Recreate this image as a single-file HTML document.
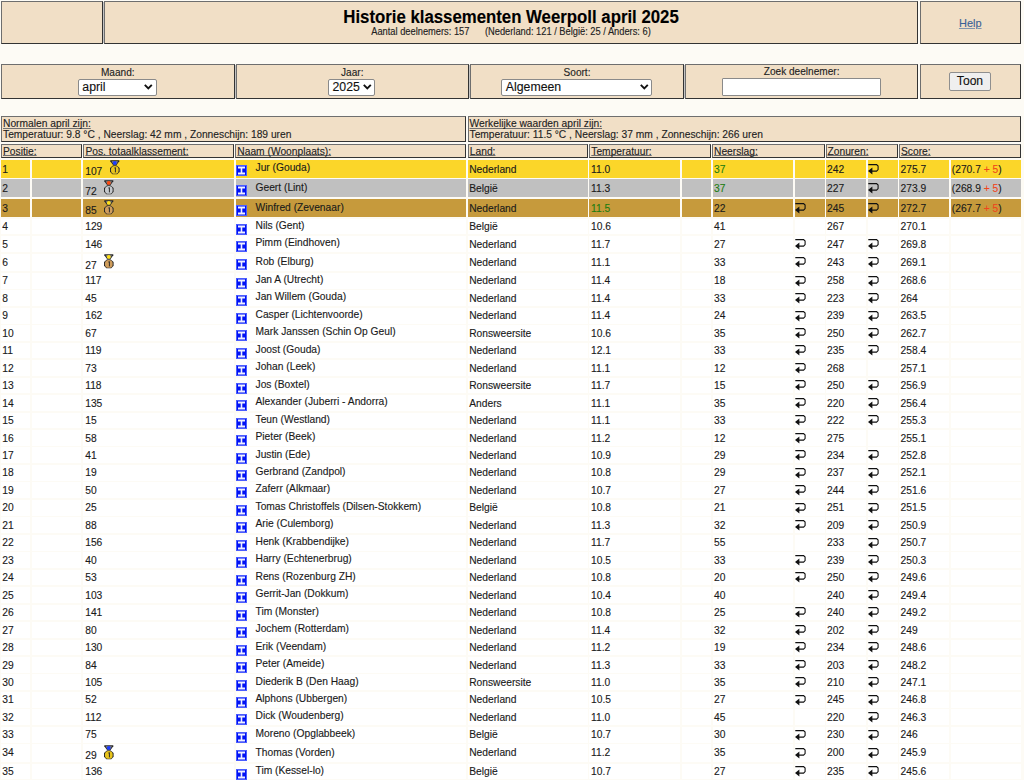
<!DOCTYPE html>
<html><head><meta charset="utf-8"><style>
html,body{margin:0;padding:0;}
body{width:1024px;height:780px;overflow:hidden;position:relative;background:#fdfbf5;font-family:"Liberation Sans",sans-serif;color:#1a1a1a;}
.t{position:absolute;line-height:0;white-space:pre;-webkit-text-stroke:0.12px currentColor;}
.hb{position:absolute;box-sizing:border-box;background:#f1dfc6;border:1px solid #555;border-top-color:#6e6e6e;border-left-color:#6e6e6e;border-bottom-color:#333;border-right-color:#333;}
.c{position:absolute;}
.ic{position:absolute;overflow:visible;}
.lnk{color:#3b6296;text-decoration:underline;text-decoration-color:#8295ad;text-underline-offset:0.5px;text-decoration-thickness:1px;}
.r{color:#f0461c;}
u{text-decoration-thickness:1px;text-underline-offset:0px;text-decoration-skip-ink:none;text-decoration-color:#707070;}
.sel{position:absolute;box-sizing:border-box;background:#fff;border:1px solid #8a8a8a;border-radius:2px;}
.chev{position:absolute;}
.inp{position:absolute;box-sizing:border-box;background:#fff;border:1px solid #8a8a8a;border-radius:1px;}
.btn{position:absolute;box-sizing:border-box;background:#efefef;border:1px solid #8f8f8f;border-radius:2px;}
</style></head><body>
<div class="c" style="left:102.5px;top:2px;width:2px;height:41px;background:#c4c4c4"></div>
<div class="hb" style="left:1px;top:1px;width:102px;height:42.5px;"></div>
<div class="hb" style="left:104px;top:1px;width:814px;height:42.5px;"></div>
<div class="hb" style="left:919.5px;top:1px;width:101.5px;height:42.5px;"></div>
<div class="t" style="left:104px;top:18.18px;font-size:16.8px;width:814px;text-align:center;font-weight:bold;transform:scaleY(1.07);transform-origin:0 5.82px;color:#000;">Historie klassementen Weerpoll april 2025</div>
<div class="t" style="left:104px;top:32.38px;font-size:9.3px;color:#222;width:814px;text-align:center;transform:scaleY(1.09);transform-origin:0 3px;">Aantal deelnemers: 157 &nbsp;&nbsp;&nbsp;&nbsp; (Nederland: 121 / België: 25 / Anders: 6)</div>
<div class="t" style="left:919.5px;top:22.79px;font-size:11px;width:101.5px;text-align:center;"><span class="lnk">Help</span></div>
<div class="hb" style="left:1px;top:64.3px;width:233.5px;height:34.3px;"></div>
<div class="hb" style="left:236px;top:64.3px;width:232.5px;height:34.3px;"></div>
<div class="hb" style="left:470px;top:64.3px;width:214px;height:34.3px;"></div>
<div class="hb" style="left:685.3px;top:64.3px;width:232.70000000000005px;height:34.3px;"></div>
<div class="hb" style="left:919.5px;top:64.3px;width:101.5px;height:34.3px;"></div>
<div class="c" style="left:234.5px;top:65px;width:1.5px;height:32.5px;background:#c4c4c4"></div>
<div class="c" style="left:468.5px;top:65px;width:1.5px;height:32.5px;background:#c4c4c4"></div>
<div class="c" style="left:684px;top:65px;width:1.2999999999999545px;height:32.5px;background:#c4c4c4"></div>
<div class="t" style="left:1px;top:72.90px;font-size:10.1px;color:#222;width:233.5px;text-align:center;">Maand:</div>
<div class="t" style="left:236px;top:72.90px;font-size:10.1px;color:#222;width:232.5px;text-align:center;">Jaar:</div>
<div class="t" style="left:470px;top:72.90px;font-size:10.1px;color:#222;width:214px;text-align:center;">Soort:</div>
<div class="t" style="left:685.3px;top:71.80px;font-size:10.1px;color:#222;width:232.70000000000005px;text-align:center;">Zoek deelnemer:</div>
<div class="sel" style="left:77.8px;top:78.5px;width:78.8px;height:17.6px;"></div><div class="t" style="left:82.3px;top:86.54px;font-size:12.3px;color:#111;">april</div><svg class="chev" style="left:144.29999999999998px;top:84.4px" width="9" height="6" viewBox="0 0 9 6"><path d="M0.8 0.9 L4.3 4.5 L7.8 0.9" fill="none" stroke="#111" stroke-width="1.9"/></svg>
<div class="sel" style="left:328px;top:78.5px;width:47.30000000000001px;height:17.6px;"></div><div class="t" style="left:332.5px;top:86.54px;font-size:12.3px;color:#111;">2025</div><svg class="chev" style="left:363.0px;top:84.4px" width="9" height="6" viewBox="0 0 9 6"><path d="M0.8 0.9 L4.3 4.5 L7.8 0.9" fill="none" stroke="#111" stroke-width="1.9"/></svg>
<div class="sel" style="left:501.3px;top:78.5px;width:150.49999999999994px;height:17.6px;"></div><div class="t" style="left:505.8px;top:86.54px;font-size:12.3px;color:#111;">Algemeen</div><svg class="chev" style="left:639.5px;top:84.4px" width="9" height="6" viewBox="0 0 9 6"><path d="M0.8 0.9 L4.3 4.5 L7.8 0.9" fill="none" stroke="#111" stroke-width="1.9"/></svg>
<div class="inp" style="left:722.2px;top:77.5px;width:158.6px;height:18.7px;"></div>
<div class="btn" style="left:949.4px;top:71.7px;width:41.2px;height:19.1px;"></div>
<div class="t" style="left:949.4px;top:80.81px;font-size:12.1px;color:#111;width:41.2px;text-align:center;">Toon</div>
<div class="hb" style="left:1px;top:116px;width:465.3px;height:26.400000000000006px;"></div>
<div class="hb" style="left:467.8px;top:116px;width:553.2px;height:26.400000000000006px;"></div>
<div class="t" style="left:3px;top:123.95px;font-size:10.25px;color:#222;"><u style="text-underline-offset:1px">Normalen april zijn:</u></div>
<div class="t" style="left:3px;top:134.55px;font-size:10.25px;color:#222;">Temperatuur: 9.8 °C , Neerslag: 42 mm , Zonneschijn: 189 uren</div>
<div class="t" style="left:469.5px;top:123.95px;font-size:10.25px;color:#222;"><u style="text-underline-offset:1px">Werkelijke waarden april zijn:</u></div>
<div class="t" style="left:469.5px;top:134.55px;font-size:10.25px;color:#222;">Temperatuur: 11.5 °C , Neerslag: 37 mm , Zonneschijn: 266 uren</div>
<div class="hb" style="left:1px;top:144px;width:81px;height:13.800000000000011px;"></div>
<div class="t" style="left:3px;top:151.75px;font-size:10.25px;color:#222;"><u>Positie:</u></div>
<div class="hb" style="left:83.4px;top:144px;width:151.1px;height:13.800000000000011px;"></div>
<div class="t" style="left:85.4px;top:151.75px;font-size:10.25px;color:#222;"><u>Pos. totaalklassement:</u></div>
<div class="hb" style="left:235.3px;top:144px;width:231.0px;height:13.800000000000011px;"></div>
<div class="t" style="left:237.3px;top:151.75px;font-size:10.25px;color:#222;"><u>Naam (Woonplaats):</u></div>
<div class="hb" style="left:467.8px;top:144px;width:120.19999999999999px;height:13.800000000000011px;"></div>
<div class="t" style="left:469.8px;top:151.75px;font-size:10.25px;color:#222;"><u>Land:</u></div>
<div class="hb" style="left:589.3px;top:144px;width:121.70000000000005px;height:13.800000000000011px;"></div>
<div class="t" style="left:591.3px;top:151.75px;font-size:10.25px;color:#222;"><u>Temperatuur:</u></div>
<div class="hb" style="left:712px;top:144px;width:112.5px;height:13.800000000000011px;"></div>
<div class="t" style="left:714px;top:151.75px;font-size:10.25px;color:#222;"><u>Neerslag:</u></div>
<div class="hb" style="left:825.5px;top:144px;width:72.5px;height:13.800000000000011px;"></div>
<div class="t" style="left:827.5px;top:151.75px;font-size:10.25px;color:#222;"><u>Zonuren:</u></div>
<div class="hb" style="left:899px;top:144px;width:122px;height:13.800000000000011px;"></div>
<div class="t" style="left:901px;top:151.75px;font-size:10.25px;color:#222;"><u>Score:</u></div>
<div class="c" style="left:1px;top:159.70px;width:29.40px;height:17.95px;background:#fbd629"></div>
<div class="c" style="left:32.1px;top:159.70px;width:49.30px;height:17.95px;background:#fbd629"></div>
<div class="c" style="left:83.1px;top:159.70px;width:150.80px;height:17.95px;background:#fbd629"></div>
<div class="c" style="left:235.6px;top:159.70px;width:230.40px;height:17.95px;background:#fbd629"></div>
<div class="c" style="left:467.7px;top:159.70px;width:119.90px;height:17.95px;background:#fbd629"></div>
<div class="c" style="left:589.3px;top:159.70px;width:90.80px;height:17.95px;background:#fbd629"></div>
<div class="c" style="left:681.8px;top:159.70px;width:29.10px;height:17.95px;background:#fbd629"></div>
<div class="c" style="left:712.6px;top:159.70px;width:80.50px;height:17.95px;background:#fbd629"></div>
<div class="c" style="left:794.8px;top:159.70px;width:29.80px;height:17.95px;background:#fbd629"></div>
<div class="c" style="left:826.3px;top:159.70px;width:39.70px;height:17.95px;background:#fbd629"></div>
<div class="c" style="left:867.7px;top:159.70px;width:30.30px;height:17.95px;background:#fbd629"></div>
<div class="c" style="left:899.2px;top:159.70px;width:50.10px;height:17.95px;background:#fbd629"></div>
<div class="c" style="left:950.9px;top:159.70px;width:70.10px;height:17.95px;background:#fbd629"></div>
<div class="t" style="left:2.2px;top:169.75px;font-size:10.25px;">1</div>
<div class="t" style="left:85.2px;top:172.10px;font-size:10.25px;">107</div>
<svg class="ic" style="left:109.9px;top:160.45px" width="10" height="15" viewBox="0 0 10 15"><path d="M0.3 0.2 H9.3 V1.2 L6.2 5.6 H3.4 L0.3 1.2 Z" fill="#262626"/><path d="M1.6 1.2 H8 L6 4.6 H3.6 Z" fill="#8a8a8a"/><circle cx="4.8" cy="2.9" r="1.9" fill="#1a3cff"/><path d="M2.9 5.4 H6.7 L9.6 8 V11.8 L7.2 14.3 H2.4 L0 11.8 V8 Z" fill="#262626"/><circle cx="4.8" cy="9.9" r="3.9" fill="#e8c41c"/><path d="M4.4 8 L5.4 7.6 V12.4" fill="none" stroke="#2a2a2a" stroke-width="1"/></svg>
<svg class="ic" style="left:236.2px;top:165.20px" width="11" height="11" viewBox="0 0 11 11"><rect x="0" y="0" width="11" height="11" fill="#4a5cff"/><rect x="1" y="1" width="9" height="9" fill="#0012f5"/><path d="M2 1.6 H9 V3.4 H6.3 V7.6 H9 V9.4 H2 V7.6 H4.7 V3.4 H2 Z" fill="#eef0ff"/></svg>
<div class="t" style="left:255.5px;top:168.25px;font-size:10.25px;">Jur (Gouda)</div>
<div class="t" style="left:469.2px;top:169.75px;font-size:10.25px;">Nederland</div>
<div class="t" style="left:591px;top:169.75px;font-size:10.25px;">11.0</div>
<div class="t" style="left:714px;top:169.75px;font-size:10.25px;color:#1d7d10;">37</div>
<div class="t" style="left:827.0px;top:169.75px;font-size:10.25px;">242</div>
<svg class="ic" style="left:868.0px;top:163.57px" width="11" height="11" viewBox="0 0 11 11"><path d="M0.3 0.6 H8.6 L10.1 2.1 V5.6 L8.6 7.1 H3.6" fill="none" stroke="#111" stroke-width="1.1"/><path d="M0 7.1 L4.4 3.6 V10.6 Z" fill="#111"/></svg>
<div class="t" style="left:900.6px;top:169.75px;font-size:10.25px;">275.7</div>
<div class="t" style="left:951.8px;top:169.75px;font-size:10.25px;">(270.7 <span class=r>+ 5</span>)</div>
<div class="c" style="left:1px;top:179.35px;width:29.40px;height:17.95px;background:#c0c0c0"></div>
<div class="c" style="left:32.1px;top:179.35px;width:49.30px;height:17.95px;background:#c0c0c0"></div>
<div class="c" style="left:83.1px;top:179.35px;width:150.80px;height:17.95px;background:#c0c0c0"></div>
<div class="c" style="left:235.6px;top:179.35px;width:230.40px;height:17.95px;background:#c0c0c0"></div>
<div class="c" style="left:467.7px;top:179.35px;width:119.90px;height:17.95px;background:#c0c0c0"></div>
<div class="c" style="left:589.3px;top:179.35px;width:90.80px;height:17.95px;background:#c0c0c0"></div>
<div class="c" style="left:681.8px;top:179.35px;width:29.10px;height:17.95px;background:#c0c0c0"></div>
<div class="c" style="left:712.6px;top:179.35px;width:80.50px;height:17.95px;background:#c0c0c0"></div>
<div class="c" style="left:794.8px;top:179.35px;width:29.80px;height:17.95px;background:#c0c0c0"></div>
<div class="c" style="left:826.3px;top:179.35px;width:39.70px;height:17.95px;background:#c0c0c0"></div>
<div class="c" style="left:867.7px;top:179.35px;width:30.30px;height:17.95px;background:#c0c0c0"></div>
<div class="c" style="left:899.2px;top:179.35px;width:50.10px;height:17.95px;background:#c0c0c0"></div>
<div class="c" style="left:950.9px;top:179.35px;width:70.10px;height:17.95px;background:#c0c0c0"></div>
<div class="t" style="left:2.2px;top:189.40px;font-size:10.25px;">2</div>
<div class="t" style="left:85.2px;top:191.75px;font-size:10.25px;">72</div>
<svg class="ic" style="left:104.2px;top:180.10px" width="10" height="15" viewBox="0 0 10 15"><path d="M0.3 0.2 H9.3 V1.2 L6.2 5.6 H3.4 L0.3 1.2 Z" fill="#262626"/><path d="M1.6 1.2 H8 L6 4.6 H3.6 Z" fill="#8a8a8a"/><circle cx="4.8" cy="2.9" r="1.9" fill="#ff4a10"/><path d="M2.9 5.4 H6.7 L9.6 8 V11.8 L7.2 14.3 H2.4 L0 11.8 V8 Z" fill="#262626"/><circle cx="4.8" cy="9.9" r="3.9" fill="#c4c8cc"/><path d="M4.4 8 L5.4 7.6 V12.4" fill="none" stroke="#2a2a2a" stroke-width="1"/></svg>
<svg class="ic" style="left:236.2px;top:184.85px" width="11" height="11" viewBox="0 0 11 11"><rect x="0" y="0" width="11" height="11" fill="#4a5cff"/><rect x="1" y="1" width="9" height="9" fill="#0012f5"/><path d="M2 1.6 H9 V3.4 H6.3 V7.6 H9 V9.4 H2 V7.6 H4.7 V3.4 H2 Z" fill="#eef0ff"/></svg>
<div class="t" style="left:255.5px;top:187.90px;font-size:10.25px;">Geert (Lint)</div>
<div class="t" style="left:469.2px;top:189.40px;font-size:10.25px;">België</div>
<div class="t" style="left:591px;top:189.40px;font-size:10.25px;">11.3</div>
<div class="t" style="left:714px;top:189.40px;font-size:10.25px;color:#1d7d10;">37</div>
<div class="t" style="left:827.0px;top:189.40px;font-size:10.25px;">227</div>
<svg class="ic" style="left:868.0px;top:183.22px" width="11" height="11" viewBox="0 0 11 11"><path d="M0.3 0.6 H8.6 L10.1 2.1 V5.6 L8.6 7.1 H3.6" fill="none" stroke="#111" stroke-width="1.1"/><path d="M0 7.1 L4.4 3.6 V10.6 Z" fill="#111"/></svg>
<div class="t" style="left:900.6px;top:189.40px;font-size:10.25px;">273.9</div>
<div class="t" style="left:951.8px;top:189.40px;font-size:10.25px;">(268.9 <span class=r>+ 5</span>)</div>
<div class="c" style="left:1px;top:199.00px;width:29.40px;height:17.95px;background:#c69a3c"></div>
<div class="c" style="left:32.1px;top:199.00px;width:49.30px;height:17.95px;background:#c69a3c"></div>
<div class="c" style="left:83.1px;top:199.00px;width:150.80px;height:17.95px;background:#c69a3c"></div>
<div class="c" style="left:235.6px;top:199.00px;width:230.40px;height:17.95px;background:#c69a3c"></div>
<div class="c" style="left:467.7px;top:199.00px;width:119.90px;height:17.95px;background:#c69a3c"></div>
<div class="c" style="left:589.3px;top:199.00px;width:90.80px;height:17.95px;background:#c69a3c"></div>
<div class="c" style="left:681.8px;top:199.00px;width:29.10px;height:17.95px;background:#c69a3c"></div>
<div class="c" style="left:712.6px;top:199.00px;width:80.50px;height:17.95px;background:#c69a3c"></div>
<div class="c" style="left:794.8px;top:199.00px;width:29.80px;height:17.95px;background:#c69a3c"></div>
<div class="c" style="left:826.3px;top:199.00px;width:39.70px;height:17.95px;background:#c69a3c"></div>
<div class="c" style="left:867.7px;top:199.00px;width:30.30px;height:17.95px;background:#c69a3c"></div>
<div class="c" style="left:899.2px;top:199.00px;width:50.10px;height:17.95px;background:#c69a3c"></div>
<div class="c" style="left:950.9px;top:199.00px;width:70.10px;height:17.95px;background:#c69a3c"></div>
<div class="t" style="left:2.2px;top:209.05px;font-size:10.25px;">3</div>
<div class="t" style="left:85.2px;top:211.40px;font-size:10.25px;">85</div>
<svg class="ic" style="left:104.2px;top:199.75px" width="10" height="15" viewBox="0 0 10 15"><path d="M0.3 0.2 H9.3 V1.2 L6.2 5.6 H3.4 L0.3 1.2 Z" fill="#262626"/><path d="M1.6 1.2 H8 L6 4.6 H3.6 Z" fill="#8a8a8a"/><circle cx="4.8" cy="2.9" r="1.9" fill="#ffe014"/><path d="M2.9 5.4 H6.7 L9.6 8 V11.8 L7.2 14.3 H2.4 L0 11.8 V8 Z" fill="#262626"/><circle cx="4.8" cy="9.9" r="3.9" fill="#cf9d5c"/><path d="M4.4 8 L5.4 7.6 V12.4" fill="none" stroke="#2a2a2a" stroke-width="1"/></svg>
<svg class="ic" style="left:236.2px;top:204.50px" width="11" height="11" viewBox="0 0 11 11"><rect x="0" y="0" width="11" height="11" fill="#4a5cff"/><rect x="1" y="1" width="9" height="9" fill="#0012f5"/><path d="M2 1.6 H9 V3.4 H6.3 V7.6 H9 V9.4 H2 V7.6 H4.7 V3.4 H2 Z" fill="#eef0ff"/></svg>
<div class="t" style="left:255.5px;top:207.55px;font-size:10.25px;">Winfred (Zevenaar)</div>
<div class="t" style="left:469.2px;top:209.05px;font-size:10.25px;">Nederland</div>
<div class="t" style="left:591px;top:209.05px;font-size:10.25px;color:#1d7d10;">11.5</div>
<div class="t" style="left:714px;top:209.05px;font-size:10.25px;">22</div>
<svg class="ic" style="left:795.4px;top:202.88px" width="11" height="11" viewBox="0 0 11 11"><path d="M0.3 0.6 H8.6 L10.1 2.1 V5.6 L8.6 7.1 H3.6" fill="none" stroke="#111" stroke-width="1.1"/><path d="M0 7.1 L4.4 3.6 V10.6 Z" fill="#111"/></svg>
<div class="t" style="left:827.0px;top:209.05px;font-size:10.25px;">245</div>
<svg class="ic" style="left:868.0px;top:202.88px" width="11" height="11" viewBox="0 0 11 11"><path d="M0.3 0.6 H8.6 L10.1 2.1 V5.6 L8.6 7.1 H3.6" fill="none" stroke="#111" stroke-width="1.1"/><path d="M0 7.1 L4.4 3.6 V10.6 Z" fill="#111"/></svg>
<div class="t" style="left:900.6px;top:209.05px;font-size:10.25px;">272.7</div>
<div class="t" style="left:951.8px;top:209.05px;font-size:10.25px;">(267.7 <span class=r>+ 5</span>)</div>
<div class="c" style="left:1px;top:218.65px;width:29.40px;height:15.76px;background:#ffffff"></div>
<div class="c" style="left:32.1px;top:218.65px;width:49.30px;height:15.76px;background:#ffffff"></div>
<div class="c" style="left:83.1px;top:218.65px;width:150.80px;height:15.76px;background:#ffffff"></div>
<div class="c" style="left:235.6px;top:218.65px;width:230.40px;height:15.76px;background:#ffffff"></div>
<div class="c" style="left:467.7px;top:218.65px;width:119.90px;height:15.76px;background:#ffffff"></div>
<div class="c" style="left:589.3px;top:218.65px;width:90.80px;height:15.76px;background:#ffffff"></div>
<div class="c" style="left:681.8px;top:218.65px;width:29.10px;height:15.76px;background:#ffffff"></div>
<div class="c" style="left:712.6px;top:218.65px;width:80.50px;height:15.76px;background:#ffffff"></div>
<div class="c" style="left:794.8px;top:218.65px;width:29.80px;height:15.76px;background:#ffffff"></div>
<div class="c" style="left:826.3px;top:218.65px;width:39.70px;height:15.76px;background:#ffffff"></div>
<div class="c" style="left:867.7px;top:218.65px;width:30.30px;height:15.76px;background:#ffffff"></div>
<div class="c" style="left:899.2px;top:218.65px;width:50.10px;height:15.76px;background:#ffffff"></div>
<div class="c" style="left:950.9px;top:218.65px;width:70.10px;height:15.76px;background:#ffffff"></div>
<div class="t" style="left:2.2px;top:227.20px;font-size:10.25px;">4</div>
<div class="t" style="left:85.2px;top:227.20px;font-size:10.25px;">129</div>
<svg class="ic" style="left:236.2px;top:223.75px" width="11" height="11" viewBox="0 0 11 11"><rect x="0" y="0" width="11" height="11" fill="#4a5cff"/><rect x="1" y="1" width="9" height="9" fill="#0012f5"/><path d="M2 1.6 H9 V3.4 H6.3 V7.6 H9 V9.4 H2 V7.6 H4.7 V3.4 H2 Z" fill="#eef0ff"/></svg>
<div class="t" style="left:255.5px;top:225.70px;font-size:10.25px;">Nils (Gent)</div>
<div class="t" style="left:469.2px;top:227.20px;font-size:10.25px;">België</div>
<div class="t" style="left:591px;top:227.20px;font-size:10.25px;">10.6</div>
<div class="t" style="left:714px;top:227.20px;font-size:10.25px;">41</div>
<div class="t" style="left:827.0px;top:227.20px;font-size:10.25px;">267</div>
<div class="t" style="left:900.6px;top:227.20px;font-size:10.25px;">270.1</div>
<div class="c" style="left:1px;top:236.11px;width:29.40px;height:15.76px;background:#ffffff"></div>
<div class="c" style="left:32.1px;top:236.11px;width:49.30px;height:15.76px;background:#ffffff"></div>
<div class="c" style="left:83.1px;top:236.11px;width:150.80px;height:15.76px;background:#ffffff"></div>
<div class="c" style="left:235.6px;top:236.11px;width:230.40px;height:15.76px;background:#ffffff"></div>
<div class="c" style="left:467.7px;top:236.11px;width:119.90px;height:15.76px;background:#ffffff"></div>
<div class="c" style="left:589.3px;top:236.11px;width:90.80px;height:15.76px;background:#ffffff"></div>
<div class="c" style="left:681.8px;top:236.11px;width:29.10px;height:15.76px;background:#ffffff"></div>
<div class="c" style="left:712.6px;top:236.11px;width:80.50px;height:15.76px;background:#ffffff"></div>
<div class="c" style="left:794.8px;top:236.11px;width:29.80px;height:15.76px;background:#ffffff"></div>
<div class="c" style="left:826.3px;top:236.11px;width:39.70px;height:15.76px;background:#ffffff"></div>
<div class="c" style="left:867.7px;top:236.11px;width:30.30px;height:15.76px;background:#ffffff"></div>
<div class="c" style="left:899.2px;top:236.11px;width:50.10px;height:15.76px;background:#ffffff"></div>
<div class="c" style="left:950.9px;top:236.11px;width:70.10px;height:15.76px;background:#ffffff"></div>
<div class="t" style="left:2.2px;top:244.66px;font-size:10.25px;">5</div>
<div class="t" style="left:85.2px;top:244.66px;font-size:10.25px;">146</div>
<svg class="ic" style="left:236.2px;top:241.21px" width="11" height="11" viewBox="0 0 11 11"><rect x="0" y="0" width="11" height="11" fill="#4a5cff"/><rect x="1" y="1" width="9" height="9" fill="#0012f5"/><path d="M2 1.6 H9 V3.4 H6.3 V7.6 H9 V9.4 H2 V7.6 H4.7 V3.4 H2 Z" fill="#eef0ff"/></svg>
<div class="t" style="left:255.5px;top:243.16px;font-size:10.25px;">Pimm (Eindhoven)</div>
<div class="t" style="left:469.2px;top:244.66px;font-size:10.25px;">Nederland</div>
<div class="t" style="left:591px;top:244.66px;font-size:10.25px;">11.7</div>
<div class="t" style="left:714px;top:244.66px;font-size:10.25px;">27</div>
<svg class="ic" style="left:795.4px;top:238.89px" width="11" height="11" viewBox="0 0 11 11"><path d="M0.3 0.6 H8.6 L10.1 2.1 V5.6 L8.6 7.1 H3.6" fill="none" stroke="#111" stroke-width="1.1"/><path d="M0 7.1 L4.4 3.6 V10.6 Z" fill="#111"/></svg>
<div class="t" style="left:827.0px;top:244.66px;font-size:10.25px;">247</div>
<svg class="ic" style="left:868.0px;top:238.89px" width="11" height="11" viewBox="0 0 11 11"><path d="M0.3 0.6 H8.6 L10.1 2.1 V5.6 L8.6 7.1 H3.6" fill="none" stroke="#111" stroke-width="1.1"/><path d="M0 7.1 L4.4 3.6 V10.6 Z" fill="#111"/></svg>
<div class="t" style="left:900.6px;top:244.66px;font-size:10.25px;">269.8</div>
<div class="c" style="left:1px;top:253.57px;width:29.40px;height:17.60px;background:#ffffff"></div>
<div class="c" style="left:32.1px;top:253.57px;width:49.30px;height:17.60px;background:#ffffff"></div>
<div class="c" style="left:83.1px;top:253.57px;width:150.80px;height:17.60px;background:#ffffff"></div>
<div class="c" style="left:235.6px;top:253.57px;width:230.40px;height:17.60px;background:#ffffff"></div>
<div class="c" style="left:467.7px;top:253.57px;width:119.90px;height:17.60px;background:#ffffff"></div>
<div class="c" style="left:589.3px;top:253.57px;width:90.80px;height:17.60px;background:#ffffff"></div>
<div class="c" style="left:681.8px;top:253.57px;width:29.10px;height:17.60px;background:#ffffff"></div>
<div class="c" style="left:712.6px;top:253.57px;width:80.50px;height:17.60px;background:#ffffff"></div>
<div class="c" style="left:794.8px;top:253.57px;width:29.80px;height:17.60px;background:#ffffff"></div>
<div class="c" style="left:826.3px;top:253.57px;width:39.70px;height:17.60px;background:#ffffff"></div>
<div class="c" style="left:867.7px;top:253.57px;width:30.30px;height:17.60px;background:#ffffff"></div>
<div class="c" style="left:899.2px;top:253.57px;width:50.10px;height:17.60px;background:#ffffff"></div>
<div class="c" style="left:950.9px;top:253.57px;width:70.10px;height:17.60px;background:#ffffff"></div>
<div class="t" style="left:2.2px;top:262.62px;font-size:10.25px;">6</div>
<div class="t" style="left:85.2px;top:265.62px;font-size:10.25px;">27</div>
<svg class="ic" style="left:104.2px;top:253.97px" width="10" height="15" viewBox="0 0 10 15"><path d="M0.3 0.2 H9.3 V1.2 L6.2 5.6 H3.4 L0.3 1.2 Z" fill="#262626"/><path d="M1.6 1.2 H8 L6 4.6 H3.6 Z" fill="#8a8a8a"/><circle cx="4.8" cy="2.9" r="1.9" fill="#ffe014"/><path d="M2.9 5.4 H6.7 L9.6 8 V11.8 L7.2 14.3 H2.4 L0 11.8 V8 Z" fill="#262626"/><circle cx="4.8" cy="9.9" r="3.9" fill="#cf9d5c"/><path d="M4.4 8 L5.4 7.6 V12.4" fill="none" stroke="#2a2a2a" stroke-width="1"/></svg>
<svg class="ic" style="left:236.2px;top:259.07px" width="11" height="11" viewBox="0 0 11 11"><rect x="0" y="0" width="11" height="11" fill="#4a5cff"/><rect x="1" y="1" width="9" height="9" fill="#0012f5"/><path d="M2 1.6 H9 V3.4 H6.3 V7.6 H9 V9.4 H2 V7.6 H4.7 V3.4 H2 Z" fill="#eef0ff"/></svg>
<div class="t" style="left:255.5px;top:262.02px;font-size:10.25px;">Rob (Elburg)</div>
<div class="t" style="left:469.2px;top:262.62px;font-size:10.25px;">Nederland</div>
<div class="t" style="left:591px;top:262.62px;font-size:10.25px;">11.1</div>
<div class="t" style="left:714px;top:262.62px;font-size:10.25px;">33</div>
<svg class="ic" style="left:795.4px;top:257.27px" width="11" height="11" viewBox="0 0 11 11"><path d="M0.3 0.6 H8.6 L10.1 2.1 V5.6 L8.6 7.1 H3.6" fill="none" stroke="#111" stroke-width="1.1"/><path d="M0 7.1 L4.4 3.6 V10.6 Z" fill="#111"/></svg>
<div class="t" style="left:827.0px;top:262.62px;font-size:10.25px;">243</div>
<svg class="ic" style="left:868.0px;top:257.27px" width="11" height="11" viewBox="0 0 11 11"><path d="M0.3 0.6 H8.6 L10.1 2.1 V5.6 L8.6 7.1 H3.6" fill="none" stroke="#111" stroke-width="1.1"/><path d="M0 7.1 L4.4 3.6 V10.6 Z" fill="#111"/></svg>
<div class="t" style="left:900.6px;top:262.62px;font-size:10.25px;">269.1</div>
<div class="c" style="left:1px;top:272.87px;width:29.40px;height:15.76px;background:#ffffff"></div>
<div class="c" style="left:32.1px;top:272.87px;width:49.30px;height:15.76px;background:#ffffff"></div>
<div class="c" style="left:83.1px;top:272.87px;width:150.80px;height:15.76px;background:#ffffff"></div>
<div class="c" style="left:235.6px;top:272.87px;width:230.40px;height:15.76px;background:#ffffff"></div>
<div class="c" style="left:467.7px;top:272.87px;width:119.90px;height:15.76px;background:#ffffff"></div>
<div class="c" style="left:589.3px;top:272.87px;width:90.80px;height:15.76px;background:#ffffff"></div>
<div class="c" style="left:681.8px;top:272.87px;width:29.10px;height:15.76px;background:#ffffff"></div>
<div class="c" style="left:712.6px;top:272.87px;width:80.50px;height:15.76px;background:#ffffff"></div>
<div class="c" style="left:794.8px;top:272.87px;width:29.80px;height:15.76px;background:#ffffff"></div>
<div class="c" style="left:826.3px;top:272.87px;width:39.70px;height:15.76px;background:#ffffff"></div>
<div class="c" style="left:867.7px;top:272.87px;width:30.30px;height:15.76px;background:#ffffff"></div>
<div class="c" style="left:899.2px;top:272.87px;width:50.10px;height:15.76px;background:#ffffff"></div>
<div class="c" style="left:950.9px;top:272.87px;width:70.10px;height:15.76px;background:#ffffff"></div>
<div class="t" style="left:2.2px;top:281.42px;font-size:10.25px;">7</div>
<div class="t" style="left:85.2px;top:281.42px;font-size:10.25px;">117</div>
<svg class="ic" style="left:236.2px;top:277.97px" width="11" height="11" viewBox="0 0 11 11"><rect x="0" y="0" width="11" height="11" fill="#4a5cff"/><rect x="1" y="1" width="9" height="9" fill="#0012f5"/><path d="M2 1.6 H9 V3.4 H6.3 V7.6 H9 V9.4 H2 V7.6 H4.7 V3.4 H2 Z" fill="#eef0ff"/></svg>
<div class="t" style="left:255.5px;top:279.92px;font-size:10.25px;">Jan A (Utrecht)</div>
<div class="t" style="left:469.2px;top:281.42px;font-size:10.25px;">Nederland</div>
<div class="t" style="left:591px;top:281.42px;font-size:10.25px;">11.4</div>
<div class="t" style="left:714px;top:281.42px;font-size:10.25px;">18</div>
<svg class="ic" style="left:795.4px;top:275.65px" width="11" height="11" viewBox="0 0 11 11"><path d="M0.3 0.6 H8.6 L10.1 2.1 V5.6 L8.6 7.1 H3.6" fill="none" stroke="#111" stroke-width="1.1"/><path d="M0 7.1 L4.4 3.6 V10.6 Z" fill="#111"/></svg>
<div class="t" style="left:827.0px;top:281.42px;font-size:10.25px;">258</div>
<svg class="ic" style="left:868.0px;top:275.65px" width="11" height="11" viewBox="0 0 11 11"><path d="M0.3 0.6 H8.6 L10.1 2.1 V5.6 L8.6 7.1 H3.6" fill="none" stroke="#111" stroke-width="1.1"/><path d="M0 7.1 L4.4 3.6 V10.6 Z" fill="#111"/></svg>
<div class="t" style="left:900.6px;top:281.42px;font-size:10.25px;">268.6</div>
<div class="c" style="left:1px;top:290.33px;width:29.40px;height:15.76px;background:#ffffff"></div>
<div class="c" style="left:32.1px;top:290.33px;width:49.30px;height:15.76px;background:#ffffff"></div>
<div class="c" style="left:83.1px;top:290.33px;width:150.80px;height:15.76px;background:#ffffff"></div>
<div class="c" style="left:235.6px;top:290.33px;width:230.40px;height:15.76px;background:#ffffff"></div>
<div class="c" style="left:467.7px;top:290.33px;width:119.90px;height:15.76px;background:#ffffff"></div>
<div class="c" style="left:589.3px;top:290.33px;width:90.80px;height:15.76px;background:#ffffff"></div>
<div class="c" style="left:681.8px;top:290.33px;width:29.10px;height:15.76px;background:#ffffff"></div>
<div class="c" style="left:712.6px;top:290.33px;width:80.50px;height:15.76px;background:#ffffff"></div>
<div class="c" style="left:794.8px;top:290.33px;width:29.80px;height:15.76px;background:#ffffff"></div>
<div class="c" style="left:826.3px;top:290.33px;width:39.70px;height:15.76px;background:#ffffff"></div>
<div class="c" style="left:867.7px;top:290.33px;width:30.30px;height:15.76px;background:#ffffff"></div>
<div class="c" style="left:899.2px;top:290.33px;width:50.10px;height:15.76px;background:#ffffff"></div>
<div class="c" style="left:950.9px;top:290.33px;width:70.10px;height:15.76px;background:#ffffff"></div>
<div class="t" style="left:2.2px;top:298.88px;font-size:10.25px;">8</div>
<div class="t" style="left:85.2px;top:298.88px;font-size:10.25px;">45</div>
<svg class="ic" style="left:236.2px;top:295.43px" width="11" height="11" viewBox="0 0 11 11"><rect x="0" y="0" width="11" height="11" fill="#4a5cff"/><rect x="1" y="1" width="9" height="9" fill="#0012f5"/><path d="M2 1.6 H9 V3.4 H6.3 V7.6 H9 V9.4 H2 V7.6 H4.7 V3.4 H2 Z" fill="#eef0ff"/></svg>
<div class="t" style="left:255.5px;top:297.38px;font-size:10.25px;">Jan Willem (Gouda)</div>
<div class="t" style="left:469.2px;top:298.88px;font-size:10.25px;">Nederland</div>
<div class="t" style="left:591px;top:298.88px;font-size:10.25px;">11.4</div>
<div class="t" style="left:714px;top:298.88px;font-size:10.25px;">33</div>
<svg class="ic" style="left:795.4px;top:293.11px" width="11" height="11" viewBox="0 0 11 11"><path d="M0.3 0.6 H8.6 L10.1 2.1 V5.6 L8.6 7.1 H3.6" fill="none" stroke="#111" stroke-width="1.1"/><path d="M0 7.1 L4.4 3.6 V10.6 Z" fill="#111"/></svg>
<div class="t" style="left:827.0px;top:298.88px;font-size:10.25px;">223</div>
<svg class="ic" style="left:868.0px;top:293.11px" width="11" height="11" viewBox="0 0 11 11"><path d="M0.3 0.6 H8.6 L10.1 2.1 V5.6 L8.6 7.1 H3.6" fill="none" stroke="#111" stroke-width="1.1"/><path d="M0 7.1 L4.4 3.6 V10.6 Z" fill="#111"/></svg>
<div class="t" style="left:900.6px;top:298.88px;font-size:10.25px;">264</div>
<div class="c" style="left:1px;top:307.79px;width:29.40px;height:15.76px;background:#ffffff"></div>
<div class="c" style="left:32.1px;top:307.79px;width:49.30px;height:15.76px;background:#ffffff"></div>
<div class="c" style="left:83.1px;top:307.79px;width:150.80px;height:15.76px;background:#ffffff"></div>
<div class="c" style="left:235.6px;top:307.79px;width:230.40px;height:15.76px;background:#ffffff"></div>
<div class="c" style="left:467.7px;top:307.79px;width:119.90px;height:15.76px;background:#ffffff"></div>
<div class="c" style="left:589.3px;top:307.79px;width:90.80px;height:15.76px;background:#ffffff"></div>
<div class="c" style="left:681.8px;top:307.79px;width:29.10px;height:15.76px;background:#ffffff"></div>
<div class="c" style="left:712.6px;top:307.79px;width:80.50px;height:15.76px;background:#ffffff"></div>
<div class="c" style="left:794.8px;top:307.79px;width:29.80px;height:15.76px;background:#ffffff"></div>
<div class="c" style="left:826.3px;top:307.79px;width:39.70px;height:15.76px;background:#ffffff"></div>
<div class="c" style="left:867.7px;top:307.79px;width:30.30px;height:15.76px;background:#ffffff"></div>
<div class="c" style="left:899.2px;top:307.79px;width:50.10px;height:15.76px;background:#ffffff"></div>
<div class="c" style="left:950.9px;top:307.79px;width:70.10px;height:15.76px;background:#ffffff"></div>
<div class="t" style="left:2.2px;top:316.34px;font-size:10.25px;">9</div>
<div class="t" style="left:85.2px;top:316.34px;font-size:10.25px;">162</div>
<svg class="ic" style="left:236.2px;top:312.89px" width="11" height="11" viewBox="0 0 11 11"><rect x="0" y="0" width="11" height="11" fill="#4a5cff"/><rect x="1" y="1" width="9" height="9" fill="#0012f5"/><path d="M2 1.6 H9 V3.4 H6.3 V7.6 H9 V9.4 H2 V7.6 H4.7 V3.4 H2 Z" fill="#eef0ff"/></svg>
<div class="t" style="left:255.5px;top:314.84px;font-size:10.25px;">Casper (Lichtenvoorde)</div>
<div class="t" style="left:469.2px;top:316.34px;font-size:10.25px;">Nederland</div>
<div class="t" style="left:591px;top:316.34px;font-size:10.25px;">11.4</div>
<div class="t" style="left:714px;top:316.34px;font-size:10.25px;">24</div>
<svg class="ic" style="left:795.4px;top:310.57px" width="11" height="11" viewBox="0 0 11 11"><path d="M0.3 0.6 H8.6 L10.1 2.1 V5.6 L8.6 7.1 H3.6" fill="none" stroke="#111" stroke-width="1.1"/><path d="M0 7.1 L4.4 3.6 V10.6 Z" fill="#111"/></svg>
<div class="t" style="left:827.0px;top:316.34px;font-size:10.25px;">239</div>
<svg class="ic" style="left:868.0px;top:310.57px" width="11" height="11" viewBox="0 0 11 11"><path d="M0.3 0.6 H8.6 L10.1 2.1 V5.6 L8.6 7.1 H3.6" fill="none" stroke="#111" stroke-width="1.1"/><path d="M0 7.1 L4.4 3.6 V10.6 Z" fill="#111"/></svg>
<div class="t" style="left:900.6px;top:316.34px;font-size:10.25px;">263.5</div>
<div class="c" style="left:1px;top:325.25px;width:29.40px;height:15.76px;background:#ffffff"></div>
<div class="c" style="left:32.1px;top:325.25px;width:49.30px;height:15.76px;background:#ffffff"></div>
<div class="c" style="left:83.1px;top:325.25px;width:150.80px;height:15.76px;background:#ffffff"></div>
<div class="c" style="left:235.6px;top:325.25px;width:230.40px;height:15.76px;background:#ffffff"></div>
<div class="c" style="left:467.7px;top:325.25px;width:119.90px;height:15.76px;background:#ffffff"></div>
<div class="c" style="left:589.3px;top:325.25px;width:90.80px;height:15.76px;background:#ffffff"></div>
<div class="c" style="left:681.8px;top:325.25px;width:29.10px;height:15.76px;background:#ffffff"></div>
<div class="c" style="left:712.6px;top:325.25px;width:80.50px;height:15.76px;background:#ffffff"></div>
<div class="c" style="left:794.8px;top:325.25px;width:29.80px;height:15.76px;background:#ffffff"></div>
<div class="c" style="left:826.3px;top:325.25px;width:39.70px;height:15.76px;background:#ffffff"></div>
<div class="c" style="left:867.7px;top:325.25px;width:30.30px;height:15.76px;background:#ffffff"></div>
<div class="c" style="left:899.2px;top:325.25px;width:50.10px;height:15.76px;background:#ffffff"></div>
<div class="c" style="left:950.9px;top:325.25px;width:70.10px;height:15.76px;background:#ffffff"></div>
<div class="t" style="left:2.2px;top:333.80px;font-size:10.25px;">10</div>
<div class="t" style="left:85.2px;top:333.80px;font-size:10.25px;">67</div>
<svg class="ic" style="left:236.2px;top:330.35px" width="11" height="11" viewBox="0 0 11 11"><rect x="0" y="0" width="11" height="11" fill="#4a5cff"/><rect x="1" y="1" width="9" height="9" fill="#0012f5"/><path d="M2 1.6 H9 V3.4 H6.3 V7.6 H9 V9.4 H2 V7.6 H4.7 V3.4 H2 Z" fill="#eef0ff"/></svg>
<div class="t" style="left:255.5px;top:332.30px;font-size:10.25px;">Mark Janssen (Schin Op Geul)</div>
<div class="t" style="left:469.2px;top:333.80px;font-size:10.25px;">Ronsweersite</div>
<div class="t" style="left:591px;top:333.80px;font-size:10.25px;">10.6</div>
<div class="t" style="left:714px;top:333.80px;font-size:10.25px;">35</div>
<svg class="ic" style="left:795.4px;top:328.03px" width="11" height="11" viewBox="0 0 11 11"><path d="M0.3 0.6 H8.6 L10.1 2.1 V5.6 L8.6 7.1 H3.6" fill="none" stroke="#111" stroke-width="1.1"/><path d="M0 7.1 L4.4 3.6 V10.6 Z" fill="#111"/></svg>
<div class="t" style="left:827.0px;top:333.80px;font-size:10.25px;">250</div>
<svg class="ic" style="left:868.0px;top:328.03px" width="11" height="11" viewBox="0 0 11 11"><path d="M0.3 0.6 H8.6 L10.1 2.1 V5.6 L8.6 7.1 H3.6" fill="none" stroke="#111" stroke-width="1.1"/><path d="M0 7.1 L4.4 3.6 V10.6 Z" fill="#111"/></svg>
<div class="t" style="left:900.6px;top:333.80px;font-size:10.25px;">262.7</div>
<div class="c" style="left:1px;top:342.71px;width:29.40px;height:15.76px;background:#ffffff"></div>
<div class="c" style="left:32.1px;top:342.71px;width:49.30px;height:15.76px;background:#ffffff"></div>
<div class="c" style="left:83.1px;top:342.71px;width:150.80px;height:15.76px;background:#ffffff"></div>
<div class="c" style="left:235.6px;top:342.71px;width:230.40px;height:15.76px;background:#ffffff"></div>
<div class="c" style="left:467.7px;top:342.71px;width:119.90px;height:15.76px;background:#ffffff"></div>
<div class="c" style="left:589.3px;top:342.71px;width:90.80px;height:15.76px;background:#ffffff"></div>
<div class="c" style="left:681.8px;top:342.71px;width:29.10px;height:15.76px;background:#ffffff"></div>
<div class="c" style="left:712.6px;top:342.71px;width:80.50px;height:15.76px;background:#ffffff"></div>
<div class="c" style="left:794.8px;top:342.71px;width:29.80px;height:15.76px;background:#ffffff"></div>
<div class="c" style="left:826.3px;top:342.71px;width:39.70px;height:15.76px;background:#ffffff"></div>
<div class="c" style="left:867.7px;top:342.71px;width:30.30px;height:15.76px;background:#ffffff"></div>
<div class="c" style="left:899.2px;top:342.71px;width:50.10px;height:15.76px;background:#ffffff"></div>
<div class="c" style="left:950.9px;top:342.71px;width:70.10px;height:15.76px;background:#ffffff"></div>
<div class="t" style="left:2.2px;top:351.26px;font-size:10.25px;">11</div>
<div class="t" style="left:85.2px;top:351.26px;font-size:10.25px;">119</div>
<svg class="ic" style="left:236.2px;top:347.81px" width="11" height="11" viewBox="0 0 11 11"><rect x="0" y="0" width="11" height="11" fill="#4a5cff"/><rect x="1" y="1" width="9" height="9" fill="#0012f5"/><path d="M2 1.6 H9 V3.4 H6.3 V7.6 H9 V9.4 H2 V7.6 H4.7 V3.4 H2 Z" fill="#eef0ff"/></svg>
<div class="t" style="left:255.5px;top:349.76px;font-size:10.25px;">Joost (Gouda)</div>
<div class="t" style="left:469.2px;top:351.26px;font-size:10.25px;">Nederland</div>
<div class="t" style="left:591px;top:351.26px;font-size:10.25px;">12.1</div>
<div class="t" style="left:714px;top:351.26px;font-size:10.25px;">33</div>
<svg class="ic" style="left:795.4px;top:345.49px" width="11" height="11" viewBox="0 0 11 11"><path d="M0.3 0.6 H8.6 L10.1 2.1 V5.6 L8.6 7.1 H3.6" fill="none" stroke="#111" stroke-width="1.1"/><path d="M0 7.1 L4.4 3.6 V10.6 Z" fill="#111"/></svg>
<div class="t" style="left:827.0px;top:351.26px;font-size:10.25px;">235</div>
<svg class="ic" style="left:868.0px;top:345.49px" width="11" height="11" viewBox="0 0 11 11"><path d="M0.3 0.6 H8.6 L10.1 2.1 V5.6 L8.6 7.1 H3.6" fill="none" stroke="#111" stroke-width="1.1"/><path d="M0 7.1 L4.4 3.6 V10.6 Z" fill="#111"/></svg>
<div class="t" style="left:900.6px;top:351.26px;font-size:10.25px;">258.4</div>
<div class="c" style="left:1px;top:360.17px;width:29.40px;height:15.76px;background:#ffffff"></div>
<div class="c" style="left:32.1px;top:360.17px;width:49.30px;height:15.76px;background:#ffffff"></div>
<div class="c" style="left:83.1px;top:360.17px;width:150.80px;height:15.76px;background:#ffffff"></div>
<div class="c" style="left:235.6px;top:360.17px;width:230.40px;height:15.76px;background:#ffffff"></div>
<div class="c" style="left:467.7px;top:360.17px;width:119.90px;height:15.76px;background:#ffffff"></div>
<div class="c" style="left:589.3px;top:360.17px;width:90.80px;height:15.76px;background:#ffffff"></div>
<div class="c" style="left:681.8px;top:360.17px;width:29.10px;height:15.76px;background:#ffffff"></div>
<div class="c" style="left:712.6px;top:360.17px;width:80.50px;height:15.76px;background:#ffffff"></div>
<div class="c" style="left:794.8px;top:360.17px;width:29.80px;height:15.76px;background:#ffffff"></div>
<div class="c" style="left:826.3px;top:360.17px;width:39.70px;height:15.76px;background:#ffffff"></div>
<div class="c" style="left:867.7px;top:360.17px;width:30.30px;height:15.76px;background:#ffffff"></div>
<div class="c" style="left:899.2px;top:360.17px;width:50.10px;height:15.76px;background:#ffffff"></div>
<div class="c" style="left:950.9px;top:360.17px;width:70.10px;height:15.76px;background:#ffffff"></div>
<div class="t" style="left:2.2px;top:368.72px;font-size:10.25px;">12</div>
<div class="t" style="left:85.2px;top:368.72px;font-size:10.25px;">73</div>
<svg class="ic" style="left:236.2px;top:365.27px" width="11" height="11" viewBox="0 0 11 11"><rect x="0" y="0" width="11" height="11" fill="#4a5cff"/><rect x="1" y="1" width="9" height="9" fill="#0012f5"/><path d="M2 1.6 H9 V3.4 H6.3 V7.6 H9 V9.4 H2 V7.6 H4.7 V3.4 H2 Z" fill="#eef0ff"/></svg>
<div class="t" style="left:255.5px;top:367.22px;font-size:10.25px;">Johan (Leek)</div>
<div class="t" style="left:469.2px;top:368.72px;font-size:10.25px;">Nederland</div>
<div class="t" style="left:591px;top:368.72px;font-size:10.25px;">11.1</div>
<div class="t" style="left:714px;top:368.72px;font-size:10.25px;">12</div>
<svg class="ic" style="left:795.4px;top:362.95px" width="11" height="11" viewBox="0 0 11 11"><path d="M0.3 0.6 H8.6 L10.1 2.1 V5.6 L8.6 7.1 H3.6" fill="none" stroke="#111" stroke-width="1.1"/><path d="M0 7.1 L4.4 3.6 V10.6 Z" fill="#111"/></svg>
<div class="t" style="left:827.0px;top:368.72px;font-size:10.25px;">268</div>
<div class="t" style="left:900.6px;top:368.72px;font-size:10.25px;">257.1</div>
<div class="c" style="left:1px;top:377.63px;width:29.40px;height:15.76px;background:#ffffff"></div>
<div class="c" style="left:32.1px;top:377.63px;width:49.30px;height:15.76px;background:#ffffff"></div>
<div class="c" style="left:83.1px;top:377.63px;width:150.80px;height:15.76px;background:#ffffff"></div>
<div class="c" style="left:235.6px;top:377.63px;width:230.40px;height:15.76px;background:#ffffff"></div>
<div class="c" style="left:467.7px;top:377.63px;width:119.90px;height:15.76px;background:#ffffff"></div>
<div class="c" style="left:589.3px;top:377.63px;width:90.80px;height:15.76px;background:#ffffff"></div>
<div class="c" style="left:681.8px;top:377.63px;width:29.10px;height:15.76px;background:#ffffff"></div>
<div class="c" style="left:712.6px;top:377.63px;width:80.50px;height:15.76px;background:#ffffff"></div>
<div class="c" style="left:794.8px;top:377.63px;width:29.80px;height:15.76px;background:#ffffff"></div>
<div class="c" style="left:826.3px;top:377.63px;width:39.70px;height:15.76px;background:#ffffff"></div>
<div class="c" style="left:867.7px;top:377.63px;width:30.30px;height:15.76px;background:#ffffff"></div>
<div class="c" style="left:899.2px;top:377.63px;width:50.10px;height:15.76px;background:#ffffff"></div>
<div class="c" style="left:950.9px;top:377.63px;width:70.10px;height:15.76px;background:#ffffff"></div>
<div class="t" style="left:2.2px;top:386.18px;font-size:10.25px;">13</div>
<div class="t" style="left:85.2px;top:386.18px;font-size:10.25px;">118</div>
<svg class="ic" style="left:236.2px;top:382.73px" width="11" height="11" viewBox="0 0 11 11"><rect x="0" y="0" width="11" height="11" fill="#4a5cff"/><rect x="1" y="1" width="9" height="9" fill="#0012f5"/><path d="M2 1.6 H9 V3.4 H6.3 V7.6 H9 V9.4 H2 V7.6 H4.7 V3.4 H2 Z" fill="#eef0ff"/></svg>
<div class="t" style="left:255.5px;top:384.68px;font-size:10.25px;">Jos (Boxtel)</div>
<div class="t" style="left:469.2px;top:386.18px;font-size:10.25px;">Ronsweersite</div>
<div class="t" style="left:591px;top:386.18px;font-size:10.25px;">11.7</div>
<div class="t" style="left:714px;top:386.18px;font-size:10.25px;">15</div>
<svg class="ic" style="left:795.4px;top:380.41px" width="11" height="11" viewBox="0 0 11 11"><path d="M0.3 0.6 H8.6 L10.1 2.1 V5.6 L8.6 7.1 H3.6" fill="none" stroke="#111" stroke-width="1.1"/><path d="M0 7.1 L4.4 3.6 V10.6 Z" fill="#111"/></svg>
<div class="t" style="left:827.0px;top:386.18px;font-size:10.25px;">250</div>
<svg class="ic" style="left:868.0px;top:380.41px" width="11" height="11" viewBox="0 0 11 11"><path d="M0.3 0.6 H8.6 L10.1 2.1 V5.6 L8.6 7.1 H3.6" fill="none" stroke="#111" stroke-width="1.1"/><path d="M0 7.1 L4.4 3.6 V10.6 Z" fill="#111"/></svg>
<div class="t" style="left:900.6px;top:386.18px;font-size:10.25px;">256.9</div>
<div class="c" style="left:1px;top:395.09px;width:29.40px;height:15.76px;background:#ffffff"></div>
<div class="c" style="left:32.1px;top:395.09px;width:49.30px;height:15.76px;background:#ffffff"></div>
<div class="c" style="left:83.1px;top:395.09px;width:150.80px;height:15.76px;background:#ffffff"></div>
<div class="c" style="left:235.6px;top:395.09px;width:230.40px;height:15.76px;background:#ffffff"></div>
<div class="c" style="left:467.7px;top:395.09px;width:119.90px;height:15.76px;background:#ffffff"></div>
<div class="c" style="left:589.3px;top:395.09px;width:90.80px;height:15.76px;background:#ffffff"></div>
<div class="c" style="left:681.8px;top:395.09px;width:29.10px;height:15.76px;background:#ffffff"></div>
<div class="c" style="left:712.6px;top:395.09px;width:80.50px;height:15.76px;background:#ffffff"></div>
<div class="c" style="left:794.8px;top:395.09px;width:29.80px;height:15.76px;background:#ffffff"></div>
<div class="c" style="left:826.3px;top:395.09px;width:39.70px;height:15.76px;background:#ffffff"></div>
<div class="c" style="left:867.7px;top:395.09px;width:30.30px;height:15.76px;background:#ffffff"></div>
<div class="c" style="left:899.2px;top:395.09px;width:50.10px;height:15.76px;background:#ffffff"></div>
<div class="c" style="left:950.9px;top:395.09px;width:70.10px;height:15.76px;background:#ffffff"></div>
<div class="t" style="left:2.2px;top:403.64px;font-size:10.25px;">14</div>
<div class="t" style="left:85.2px;top:403.64px;font-size:10.25px;">135</div>
<svg class="ic" style="left:236.2px;top:400.19px" width="11" height="11" viewBox="0 0 11 11"><rect x="0" y="0" width="11" height="11" fill="#4a5cff"/><rect x="1" y="1" width="9" height="9" fill="#0012f5"/><path d="M2 1.6 H9 V3.4 H6.3 V7.6 H9 V9.4 H2 V7.6 H4.7 V3.4 H2 Z" fill="#eef0ff"/></svg>
<div class="t" style="left:255.5px;top:402.14px;font-size:10.25px;">Alexander (Juberri - Andorra)</div>
<div class="t" style="left:469.2px;top:403.64px;font-size:10.25px;">Anders</div>
<div class="t" style="left:591px;top:403.64px;font-size:10.25px;">11.1</div>
<div class="t" style="left:714px;top:403.64px;font-size:10.25px;">35</div>
<svg class="ic" style="left:795.4px;top:397.87px" width="11" height="11" viewBox="0 0 11 11"><path d="M0.3 0.6 H8.6 L10.1 2.1 V5.6 L8.6 7.1 H3.6" fill="none" stroke="#111" stroke-width="1.1"/><path d="M0 7.1 L4.4 3.6 V10.6 Z" fill="#111"/></svg>
<div class="t" style="left:827.0px;top:403.64px;font-size:10.25px;">220</div>
<svg class="ic" style="left:868.0px;top:397.87px" width="11" height="11" viewBox="0 0 11 11"><path d="M0.3 0.6 H8.6 L10.1 2.1 V5.6 L8.6 7.1 H3.6" fill="none" stroke="#111" stroke-width="1.1"/><path d="M0 7.1 L4.4 3.6 V10.6 Z" fill="#111"/></svg>
<div class="t" style="left:900.6px;top:403.64px;font-size:10.25px;">256.4</div>
<div class="c" style="left:1px;top:412.55px;width:29.40px;height:15.76px;background:#ffffff"></div>
<div class="c" style="left:32.1px;top:412.55px;width:49.30px;height:15.76px;background:#ffffff"></div>
<div class="c" style="left:83.1px;top:412.55px;width:150.80px;height:15.76px;background:#ffffff"></div>
<div class="c" style="left:235.6px;top:412.55px;width:230.40px;height:15.76px;background:#ffffff"></div>
<div class="c" style="left:467.7px;top:412.55px;width:119.90px;height:15.76px;background:#ffffff"></div>
<div class="c" style="left:589.3px;top:412.55px;width:90.80px;height:15.76px;background:#ffffff"></div>
<div class="c" style="left:681.8px;top:412.55px;width:29.10px;height:15.76px;background:#ffffff"></div>
<div class="c" style="left:712.6px;top:412.55px;width:80.50px;height:15.76px;background:#ffffff"></div>
<div class="c" style="left:794.8px;top:412.55px;width:29.80px;height:15.76px;background:#ffffff"></div>
<div class="c" style="left:826.3px;top:412.55px;width:39.70px;height:15.76px;background:#ffffff"></div>
<div class="c" style="left:867.7px;top:412.55px;width:30.30px;height:15.76px;background:#ffffff"></div>
<div class="c" style="left:899.2px;top:412.55px;width:50.10px;height:15.76px;background:#ffffff"></div>
<div class="c" style="left:950.9px;top:412.55px;width:70.10px;height:15.76px;background:#ffffff"></div>
<div class="t" style="left:2.2px;top:421.10px;font-size:10.25px;">15</div>
<div class="t" style="left:85.2px;top:421.10px;font-size:10.25px;">15</div>
<svg class="ic" style="left:236.2px;top:417.65px" width="11" height="11" viewBox="0 0 11 11"><rect x="0" y="0" width="11" height="11" fill="#4a5cff"/><rect x="1" y="1" width="9" height="9" fill="#0012f5"/><path d="M2 1.6 H9 V3.4 H6.3 V7.6 H9 V9.4 H2 V7.6 H4.7 V3.4 H2 Z" fill="#eef0ff"/></svg>
<div class="t" style="left:255.5px;top:419.60px;font-size:10.25px;">Teun (Westland)</div>
<div class="t" style="left:469.2px;top:421.10px;font-size:10.25px;">Nederland</div>
<div class="t" style="left:591px;top:421.10px;font-size:10.25px;">11.1</div>
<div class="t" style="left:714px;top:421.10px;font-size:10.25px;">33</div>
<svg class="ic" style="left:795.4px;top:415.33px" width="11" height="11" viewBox="0 0 11 11"><path d="M0.3 0.6 H8.6 L10.1 2.1 V5.6 L8.6 7.1 H3.6" fill="none" stroke="#111" stroke-width="1.1"/><path d="M0 7.1 L4.4 3.6 V10.6 Z" fill="#111"/></svg>
<div class="t" style="left:827.0px;top:421.10px;font-size:10.25px;">222</div>
<svg class="ic" style="left:868.0px;top:415.33px" width="11" height="11" viewBox="0 0 11 11"><path d="M0.3 0.6 H8.6 L10.1 2.1 V5.6 L8.6 7.1 H3.6" fill="none" stroke="#111" stroke-width="1.1"/><path d="M0 7.1 L4.4 3.6 V10.6 Z" fill="#111"/></svg>
<div class="t" style="left:900.6px;top:421.10px;font-size:10.25px;">255.3</div>
<div class="c" style="left:1px;top:430.01px;width:29.40px;height:15.76px;background:#ffffff"></div>
<div class="c" style="left:32.1px;top:430.01px;width:49.30px;height:15.76px;background:#ffffff"></div>
<div class="c" style="left:83.1px;top:430.01px;width:150.80px;height:15.76px;background:#ffffff"></div>
<div class="c" style="left:235.6px;top:430.01px;width:230.40px;height:15.76px;background:#ffffff"></div>
<div class="c" style="left:467.7px;top:430.01px;width:119.90px;height:15.76px;background:#ffffff"></div>
<div class="c" style="left:589.3px;top:430.01px;width:90.80px;height:15.76px;background:#ffffff"></div>
<div class="c" style="left:681.8px;top:430.01px;width:29.10px;height:15.76px;background:#ffffff"></div>
<div class="c" style="left:712.6px;top:430.01px;width:80.50px;height:15.76px;background:#ffffff"></div>
<div class="c" style="left:794.8px;top:430.01px;width:29.80px;height:15.76px;background:#ffffff"></div>
<div class="c" style="left:826.3px;top:430.01px;width:39.70px;height:15.76px;background:#ffffff"></div>
<div class="c" style="left:867.7px;top:430.01px;width:30.30px;height:15.76px;background:#ffffff"></div>
<div class="c" style="left:899.2px;top:430.01px;width:50.10px;height:15.76px;background:#ffffff"></div>
<div class="c" style="left:950.9px;top:430.01px;width:70.10px;height:15.76px;background:#ffffff"></div>
<div class="t" style="left:2.2px;top:438.56px;font-size:10.25px;">16</div>
<div class="t" style="left:85.2px;top:438.56px;font-size:10.25px;">58</div>
<svg class="ic" style="left:236.2px;top:435.11px" width="11" height="11" viewBox="0 0 11 11"><rect x="0" y="0" width="11" height="11" fill="#4a5cff"/><rect x="1" y="1" width="9" height="9" fill="#0012f5"/><path d="M2 1.6 H9 V3.4 H6.3 V7.6 H9 V9.4 H2 V7.6 H4.7 V3.4 H2 Z" fill="#eef0ff"/></svg>
<div class="t" style="left:255.5px;top:437.06px;font-size:10.25px;">Pieter (Beek)</div>
<div class="t" style="left:469.2px;top:438.56px;font-size:10.25px;">Nederland</div>
<div class="t" style="left:591px;top:438.56px;font-size:10.25px;">11.2</div>
<div class="t" style="left:714px;top:438.56px;font-size:10.25px;">12</div>
<svg class="ic" style="left:795.4px;top:432.79px" width="11" height="11" viewBox="0 0 11 11"><path d="M0.3 0.6 H8.6 L10.1 2.1 V5.6 L8.6 7.1 H3.6" fill="none" stroke="#111" stroke-width="1.1"/><path d="M0 7.1 L4.4 3.6 V10.6 Z" fill="#111"/></svg>
<div class="t" style="left:827.0px;top:438.56px;font-size:10.25px;">275</div>
<div class="t" style="left:900.6px;top:438.56px;font-size:10.25px;">255.1</div>
<div class="c" style="left:1px;top:447.47px;width:29.40px;height:15.76px;background:#ffffff"></div>
<div class="c" style="left:32.1px;top:447.47px;width:49.30px;height:15.76px;background:#ffffff"></div>
<div class="c" style="left:83.1px;top:447.47px;width:150.80px;height:15.76px;background:#ffffff"></div>
<div class="c" style="left:235.6px;top:447.47px;width:230.40px;height:15.76px;background:#ffffff"></div>
<div class="c" style="left:467.7px;top:447.47px;width:119.90px;height:15.76px;background:#ffffff"></div>
<div class="c" style="left:589.3px;top:447.47px;width:90.80px;height:15.76px;background:#ffffff"></div>
<div class="c" style="left:681.8px;top:447.47px;width:29.10px;height:15.76px;background:#ffffff"></div>
<div class="c" style="left:712.6px;top:447.47px;width:80.50px;height:15.76px;background:#ffffff"></div>
<div class="c" style="left:794.8px;top:447.47px;width:29.80px;height:15.76px;background:#ffffff"></div>
<div class="c" style="left:826.3px;top:447.47px;width:39.70px;height:15.76px;background:#ffffff"></div>
<div class="c" style="left:867.7px;top:447.47px;width:30.30px;height:15.76px;background:#ffffff"></div>
<div class="c" style="left:899.2px;top:447.47px;width:50.10px;height:15.76px;background:#ffffff"></div>
<div class="c" style="left:950.9px;top:447.47px;width:70.10px;height:15.76px;background:#ffffff"></div>
<div class="t" style="left:2.2px;top:456.02px;font-size:10.25px;">17</div>
<div class="t" style="left:85.2px;top:456.02px;font-size:10.25px;">41</div>
<svg class="ic" style="left:236.2px;top:452.57px" width="11" height="11" viewBox="0 0 11 11"><rect x="0" y="0" width="11" height="11" fill="#4a5cff"/><rect x="1" y="1" width="9" height="9" fill="#0012f5"/><path d="M2 1.6 H9 V3.4 H6.3 V7.6 H9 V9.4 H2 V7.6 H4.7 V3.4 H2 Z" fill="#eef0ff"/></svg>
<div class="t" style="left:255.5px;top:454.52px;font-size:10.25px;">Justin (Ede)</div>
<div class="t" style="left:469.2px;top:456.02px;font-size:10.25px;">Nederland</div>
<div class="t" style="left:591px;top:456.02px;font-size:10.25px;">10.9</div>
<div class="t" style="left:714px;top:456.02px;font-size:10.25px;">29</div>
<svg class="ic" style="left:795.4px;top:450.25px" width="11" height="11" viewBox="0 0 11 11"><path d="M0.3 0.6 H8.6 L10.1 2.1 V5.6 L8.6 7.1 H3.6" fill="none" stroke="#111" stroke-width="1.1"/><path d="M0 7.1 L4.4 3.6 V10.6 Z" fill="#111"/></svg>
<div class="t" style="left:827.0px;top:456.02px;font-size:10.25px;">234</div>
<svg class="ic" style="left:868.0px;top:450.25px" width="11" height="11" viewBox="0 0 11 11"><path d="M0.3 0.6 H8.6 L10.1 2.1 V5.6 L8.6 7.1 H3.6" fill="none" stroke="#111" stroke-width="1.1"/><path d="M0 7.1 L4.4 3.6 V10.6 Z" fill="#111"/></svg>
<div class="t" style="left:900.6px;top:456.02px;font-size:10.25px;">252.8</div>
<div class="c" style="left:1px;top:464.93px;width:29.40px;height:15.76px;background:#ffffff"></div>
<div class="c" style="left:32.1px;top:464.93px;width:49.30px;height:15.76px;background:#ffffff"></div>
<div class="c" style="left:83.1px;top:464.93px;width:150.80px;height:15.76px;background:#ffffff"></div>
<div class="c" style="left:235.6px;top:464.93px;width:230.40px;height:15.76px;background:#ffffff"></div>
<div class="c" style="left:467.7px;top:464.93px;width:119.90px;height:15.76px;background:#ffffff"></div>
<div class="c" style="left:589.3px;top:464.93px;width:90.80px;height:15.76px;background:#ffffff"></div>
<div class="c" style="left:681.8px;top:464.93px;width:29.10px;height:15.76px;background:#ffffff"></div>
<div class="c" style="left:712.6px;top:464.93px;width:80.50px;height:15.76px;background:#ffffff"></div>
<div class="c" style="left:794.8px;top:464.93px;width:29.80px;height:15.76px;background:#ffffff"></div>
<div class="c" style="left:826.3px;top:464.93px;width:39.70px;height:15.76px;background:#ffffff"></div>
<div class="c" style="left:867.7px;top:464.93px;width:30.30px;height:15.76px;background:#ffffff"></div>
<div class="c" style="left:899.2px;top:464.93px;width:50.10px;height:15.76px;background:#ffffff"></div>
<div class="c" style="left:950.9px;top:464.93px;width:70.10px;height:15.76px;background:#ffffff"></div>
<div class="t" style="left:2.2px;top:473.48px;font-size:10.25px;">18</div>
<div class="t" style="left:85.2px;top:473.48px;font-size:10.25px;">19</div>
<svg class="ic" style="left:236.2px;top:470.03px" width="11" height="11" viewBox="0 0 11 11"><rect x="0" y="0" width="11" height="11" fill="#4a5cff"/><rect x="1" y="1" width="9" height="9" fill="#0012f5"/><path d="M2 1.6 H9 V3.4 H6.3 V7.6 H9 V9.4 H2 V7.6 H4.7 V3.4 H2 Z" fill="#eef0ff"/></svg>
<div class="t" style="left:255.5px;top:471.98px;font-size:10.25px;">Gerbrand (Zandpol)</div>
<div class="t" style="left:469.2px;top:473.48px;font-size:10.25px;">Nederland</div>
<div class="t" style="left:591px;top:473.48px;font-size:10.25px;">10.8</div>
<div class="t" style="left:714px;top:473.48px;font-size:10.25px;">29</div>
<svg class="ic" style="left:795.4px;top:467.71px" width="11" height="11" viewBox="0 0 11 11"><path d="M0.3 0.6 H8.6 L10.1 2.1 V5.6 L8.6 7.1 H3.6" fill="none" stroke="#111" stroke-width="1.1"/><path d="M0 7.1 L4.4 3.6 V10.6 Z" fill="#111"/></svg>
<div class="t" style="left:827.0px;top:473.48px;font-size:10.25px;">237</div>
<svg class="ic" style="left:868.0px;top:467.71px" width="11" height="11" viewBox="0 0 11 11"><path d="M0.3 0.6 H8.6 L10.1 2.1 V5.6 L8.6 7.1 H3.6" fill="none" stroke="#111" stroke-width="1.1"/><path d="M0 7.1 L4.4 3.6 V10.6 Z" fill="#111"/></svg>
<div class="t" style="left:900.6px;top:473.48px;font-size:10.25px;">252.1</div>
<div class="c" style="left:1px;top:482.39px;width:29.40px;height:15.76px;background:#ffffff"></div>
<div class="c" style="left:32.1px;top:482.39px;width:49.30px;height:15.76px;background:#ffffff"></div>
<div class="c" style="left:83.1px;top:482.39px;width:150.80px;height:15.76px;background:#ffffff"></div>
<div class="c" style="left:235.6px;top:482.39px;width:230.40px;height:15.76px;background:#ffffff"></div>
<div class="c" style="left:467.7px;top:482.39px;width:119.90px;height:15.76px;background:#ffffff"></div>
<div class="c" style="left:589.3px;top:482.39px;width:90.80px;height:15.76px;background:#ffffff"></div>
<div class="c" style="left:681.8px;top:482.39px;width:29.10px;height:15.76px;background:#ffffff"></div>
<div class="c" style="left:712.6px;top:482.39px;width:80.50px;height:15.76px;background:#ffffff"></div>
<div class="c" style="left:794.8px;top:482.39px;width:29.80px;height:15.76px;background:#ffffff"></div>
<div class="c" style="left:826.3px;top:482.39px;width:39.70px;height:15.76px;background:#ffffff"></div>
<div class="c" style="left:867.7px;top:482.39px;width:30.30px;height:15.76px;background:#ffffff"></div>
<div class="c" style="left:899.2px;top:482.39px;width:50.10px;height:15.76px;background:#ffffff"></div>
<div class="c" style="left:950.9px;top:482.39px;width:70.10px;height:15.76px;background:#ffffff"></div>
<div class="t" style="left:2.2px;top:490.94px;font-size:10.25px;">19</div>
<div class="t" style="left:85.2px;top:490.94px;font-size:10.25px;">50</div>
<svg class="ic" style="left:236.2px;top:487.49px" width="11" height="11" viewBox="0 0 11 11"><rect x="0" y="0" width="11" height="11" fill="#4a5cff"/><rect x="1" y="1" width="9" height="9" fill="#0012f5"/><path d="M2 1.6 H9 V3.4 H6.3 V7.6 H9 V9.4 H2 V7.6 H4.7 V3.4 H2 Z" fill="#eef0ff"/></svg>
<div class="t" style="left:255.5px;top:489.44px;font-size:10.25px;">Zaferr (Alkmaar)</div>
<div class="t" style="left:469.2px;top:490.94px;font-size:10.25px;">Nederland</div>
<div class="t" style="left:591px;top:490.94px;font-size:10.25px;">10.7</div>
<div class="t" style="left:714px;top:490.94px;font-size:10.25px;">27</div>
<svg class="ic" style="left:795.4px;top:485.17px" width="11" height="11" viewBox="0 0 11 11"><path d="M0.3 0.6 H8.6 L10.1 2.1 V5.6 L8.6 7.1 H3.6" fill="none" stroke="#111" stroke-width="1.1"/><path d="M0 7.1 L4.4 3.6 V10.6 Z" fill="#111"/></svg>
<div class="t" style="left:827.0px;top:490.94px;font-size:10.25px;">244</div>
<svg class="ic" style="left:868.0px;top:485.17px" width="11" height="11" viewBox="0 0 11 11"><path d="M0.3 0.6 H8.6 L10.1 2.1 V5.6 L8.6 7.1 H3.6" fill="none" stroke="#111" stroke-width="1.1"/><path d="M0 7.1 L4.4 3.6 V10.6 Z" fill="#111"/></svg>
<div class="t" style="left:900.6px;top:490.94px;font-size:10.25px;">251.6</div>
<div class="c" style="left:1px;top:499.85px;width:29.40px;height:15.76px;background:#ffffff"></div>
<div class="c" style="left:32.1px;top:499.85px;width:49.30px;height:15.76px;background:#ffffff"></div>
<div class="c" style="left:83.1px;top:499.85px;width:150.80px;height:15.76px;background:#ffffff"></div>
<div class="c" style="left:235.6px;top:499.85px;width:230.40px;height:15.76px;background:#ffffff"></div>
<div class="c" style="left:467.7px;top:499.85px;width:119.90px;height:15.76px;background:#ffffff"></div>
<div class="c" style="left:589.3px;top:499.85px;width:90.80px;height:15.76px;background:#ffffff"></div>
<div class="c" style="left:681.8px;top:499.85px;width:29.10px;height:15.76px;background:#ffffff"></div>
<div class="c" style="left:712.6px;top:499.85px;width:80.50px;height:15.76px;background:#ffffff"></div>
<div class="c" style="left:794.8px;top:499.85px;width:29.80px;height:15.76px;background:#ffffff"></div>
<div class="c" style="left:826.3px;top:499.85px;width:39.70px;height:15.76px;background:#ffffff"></div>
<div class="c" style="left:867.7px;top:499.85px;width:30.30px;height:15.76px;background:#ffffff"></div>
<div class="c" style="left:899.2px;top:499.85px;width:50.10px;height:15.76px;background:#ffffff"></div>
<div class="c" style="left:950.9px;top:499.85px;width:70.10px;height:15.76px;background:#ffffff"></div>
<div class="t" style="left:2.2px;top:508.40px;font-size:10.25px;">20</div>
<div class="t" style="left:85.2px;top:508.40px;font-size:10.25px;">25</div>
<svg class="ic" style="left:236.2px;top:504.95px" width="11" height="11" viewBox="0 0 11 11"><rect x="0" y="0" width="11" height="11" fill="#4a5cff"/><rect x="1" y="1" width="9" height="9" fill="#0012f5"/><path d="M2 1.6 H9 V3.4 H6.3 V7.6 H9 V9.4 H2 V7.6 H4.7 V3.4 H2 Z" fill="#eef0ff"/></svg>
<div class="t" style="left:255.5px;top:506.90px;font-size:10.25px;">Tomas Christoffels (Dilsen-Stokkem)</div>
<div class="t" style="left:469.2px;top:508.40px;font-size:10.25px;">België</div>
<div class="t" style="left:591px;top:508.40px;font-size:10.25px;">10.8</div>
<div class="t" style="left:714px;top:508.40px;font-size:10.25px;">21</div>
<svg class="ic" style="left:795.4px;top:502.63px" width="11" height="11" viewBox="0 0 11 11"><path d="M0.3 0.6 H8.6 L10.1 2.1 V5.6 L8.6 7.1 H3.6" fill="none" stroke="#111" stroke-width="1.1"/><path d="M0 7.1 L4.4 3.6 V10.6 Z" fill="#111"/></svg>
<div class="t" style="left:827.0px;top:508.40px;font-size:10.25px;">251</div>
<svg class="ic" style="left:868.0px;top:502.63px" width="11" height="11" viewBox="0 0 11 11"><path d="M0.3 0.6 H8.6 L10.1 2.1 V5.6 L8.6 7.1 H3.6" fill="none" stroke="#111" stroke-width="1.1"/><path d="M0 7.1 L4.4 3.6 V10.6 Z" fill="#111"/></svg>
<div class="t" style="left:900.6px;top:508.40px;font-size:10.25px;">251.5</div>
<div class="c" style="left:1px;top:517.31px;width:29.40px;height:15.76px;background:#ffffff"></div>
<div class="c" style="left:32.1px;top:517.31px;width:49.30px;height:15.76px;background:#ffffff"></div>
<div class="c" style="left:83.1px;top:517.31px;width:150.80px;height:15.76px;background:#ffffff"></div>
<div class="c" style="left:235.6px;top:517.31px;width:230.40px;height:15.76px;background:#ffffff"></div>
<div class="c" style="left:467.7px;top:517.31px;width:119.90px;height:15.76px;background:#ffffff"></div>
<div class="c" style="left:589.3px;top:517.31px;width:90.80px;height:15.76px;background:#ffffff"></div>
<div class="c" style="left:681.8px;top:517.31px;width:29.10px;height:15.76px;background:#ffffff"></div>
<div class="c" style="left:712.6px;top:517.31px;width:80.50px;height:15.76px;background:#ffffff"></div>
<div class="c" style="left:794.8px;top:517.31px;width:29.80px;height:15.76px;background:#ffffff"></div>
<div class="c" style="left:826.3px;top:517.31px;width:39.70px;height:15.76px;background:#ffffff"></div>
<div class="c" style="left:867.7px;top:517.31px;width:30.30px;height:15.76px;background:#ffffff"></div>
<div class="c" style="left:899.2px;top:517.31px;width:50.10px;height:15.76px;background:#ffffff"></div>
<div class="c" style="left:950.9px;top:517.31px;width:70.10px;height:15.76px;background:#ffffff"></div>
<div class="t" style="left:2.2px;top:525.86px;font-size:10.25px;">21</div>
<div class="t" style="left:85.2px;top:525.86px;font-size:10.25px;">88</div>
<svg class="ic" style="left:236.2px;top:522.41px" width="11" height="11" viewBox="0 0 11 11"><rect x="0" y="0" width="11" height="11" fill="#4a5cff"/><rect x="1" y="1" width="9" height="9" fill="#0012f5"/><path d="M2 1.6 H9 V3.4 H6.3 V7.6 H9 V9.4 H2 V7.6 H4.7 V3.4 H2 Z" fill="#eef0ff"/></svg>
<div class="t" style="left:255.5px;top:524.36px;font-size:10.25px;">Arie (Culemborg)</div>
<div class="t" style="left:469.2px;top:525.86px;font-size:10.25px;">Nederland</div>
<div class="t" style="left:591px;top:525.86px;font-size:10.25px;">11.3</div>
<div class="t" style="left:714px;top:525.86px;font-size:10.25px;">32</div>
<svg class="ic" style="left:795.4px;top:520.09px" width="11" height="11" viewBox="0 0 11 11"><path d="M0.3 0.6 H8.6 L10.1 2.1 V5.6 L8.6 7.1 H3.6" fill="none" stroke="#111" stroke-width="1.1"/><path d="M0 7.1 L4.4 3.6 V10.6 Z" fill="#111"/></svg>
<div class="t" style="left:827.0px;top:525.86px;font-size:10.25px;">209</div>
<svg class="ic" style="left:868.0px;top:520.09px" width="11" height="11" viewBox="0 0 11 11"><path d="M0.3 0.6 H8.6 L10.1 2.1 V5.6 L8.6 7.1 H3.6" fill="none" stroke="#111" stroke-width="1.1"/><path d="M0 7.1 L4.4 3.6 V10.6 Z" fill="#111"/></svg>
<div class="t" style="left:900.6px;top:525.86px;font-size:10.25px;">250.9</div>
<div class="c" style="left:1px;top:534.77px;width:29.40px;height:15.76px;background:#ffffff"></div>
<div class="c" style="left:32.1px;top:534.77px;width:49.30px;height:15.76px;background:#ffffff"></div>
<div class="c" style="left:83.1px;top:534.77px;width:150.80px;height:15.76px;background:#ffffff"></div>
<div class="c" style="left:235.6px;top:534.77px;width:230.40px;height:15.76px;background:#ffffff"></div>
<div class="c" style="left:467.7px;top:534.77px;width:119.90px;height:15.76px;background:#ffffff"></div>
<div class="c" style="left:589.3px;top:534.77px;width:90.80px;height:15.76px;background:#ffffff"></div>
<div class="c" style="left:681.8px;top:534.77px;width:29.10px;height:15.76px;background:#ffffff"></div>
<div class="c" style="left:712.6px;top:534.77px;width:80.50px;height:15.76px;background:#ffffff"></div>
<div class="c" style="left:794.8px;top:534.77px;width:29.80px;height:15.76px;background:#ffffff"></div>
<div class="c" style="left:826.3px;top:534.77px;width:39.70px;height:15.76px;background:#ffffff"></div>
<div class="c" style="left:867.7px;top:534.77px;width:30.30px;height:15.76px;background:#ffffff"></div>
<div class="c" style="left:899.2px;top:534.77px;width:50.10px;height:15.76px;background:#ffffff"></div>
<div class="c" style="left:950.9px;top:534.77px;width:70.10px;height:15.76px;background:#ffffff"></div>
<div class="t" style="left:2.2px;top:543.32px;font-size:10.25px;">22</div>
<div class="t" style="left:85.2px;top:543.32px;font-size:10.25px;">156</div>
<svg class="ic" style="left:236.2px;top:539.87px" width="11" height="11" viewBox="0 0 11 11"><rect x="0" y="0" width="11" height="11" fill="#4a5cff"/><rect x="1" y="1" width="9" height="9" fill="#0012f5"/><path d="M2 1.6 H9 V3.4 H6.3 V7.6 H9 V9.4 H2 V7.6 H4.7 V3.4 H2 Z" fill="#eef0ff"/></svg>
<div class="t" style="left:255.5px;top:541.82px;font-size:10.25px;">Henk (Krabbendijke)</div>
<div class="t" style="left:469.2px;top:543.32px;font-size:10.25px;">Nederland</div>
<div class="t" style="left:591px;top:543.32px;font-size:10.25px;">11.7</div>
<div class="t" style="left:714px;top:543.32px;font-size:10.25px;">55</div>
<div class="t" style="left:827.0px;top:543.32px;font-size:10.25px;">233</div>
<svg class="ic" style="left:868.0px;top:537.55px" width="11" height="11" viewBox="0 0 11 11"><path d="M0.3 0.6 H8.6 L10.1 2.1 V5.6 L8.6 7.1 H3.6" fill="none" stroke="#111" stroke-width="1.1"/><path d="M0 7.1 L4.4 3.6 V10.6 Z" fill="#111"/></svg>
<div class="t" style="left:900.6px;top:543.32px;font-size:10.25px;">250.7</div>
<div class="c" style="left:1px;top:552.23px;width:29.40px;height:15.76px;background:#ffffff"></div>
<div class="c" style="left:32.1px;top:552.23px;width:49.30px;height:15.76px;background:#ffffff"></div>
<div class="c" style="left:83.1px;top:552.23px;width:150.80px;height:15.76px;background:#ffffff"></div>
<div class="c" style="left:235.6px;top:552.23px;width:230.40px;height:15.76px;background:#ffffff"></div>
<div class="c" style="left:467.7px;top:552.23px;width:119.90px;height:15.76px;background:#ffffff"></div>
<div class="c" style="left:589.3px;top:552.23px;width:90.80px;height:15.76px;background:#ffffff"></div>
<div class="c" style="left:681.8px;top:552.23px;width:29.10px;height:15.76px;background:#ffffff"></div>
<div class="c" style="left:712.6px;top:552.23px;width:80.50px;height:15.76px;background:#ffffff"></div>
<div class="c" style="left:794.8px;top:552.23px;width:29.80px;height:15.76px;background:#ffffff"></div>
<div class="c" style="left:826.3px;top:552.23px;width:39.70px;height:15.76px;background:#ffffff"></div>
<div class="c" style="left:867.7px;top:552.23px;width:30.30px;height:15.76px;background:#ffffff"></div>
<div class="c" style="left:899.2px;top:552.23px;width:50.10px;height:15.76px;background:#ffffff"></div>
<div class="c" style="left:950.9px;top:552.23px;width:70.10px;height:15.76px;background:#ffffff"></div>
<div class="t" style="left:2.2px;top:560.78px;font-size:10.25px;">23</div>
<div class="t" style="left:85.2px;top:560.78px;font-size:10.25px;">40</div>
<svg class="ic" style="left:236.2px;top:557.33px" width="11" height="11" viewBox="0 0 11 11"><rect x="0" y="0" width="11" height="11" fill="#4a5cff"/><rect x="1" y="1" width="9" height="9" fill="#0012f5"/><path d="M2 1.6 H9 V3.4 H6.3 V7.6 H9 V9.4 H2 V7.6 H4.7 V3.4 H2 Z" fill="#eef0ff"/></svg>
<div class="t" style="left:255.5px;top:559.28px;font-size:10.25px;">Harry (Echtenerbrug)</div>
<div class="t" style="left:469.2px;top:560.78px;font-size:10.25px;">Nederland</div>
<div class="t" style="left:591px;top:560.78px;font-size:10.25px;">10.5</div>
<div class="t" style="left:714px;top:560.78px;font-size:10.25px;">33</div>
<svg class="ic" style="left:795.4px;top:555.01px" width="11" height="11" viewBox="0 0 11 11"><path d="M0.3 0.6 H8.6 L10.1 2.1 V5.6 L8.6 7.1 H3.6" fill="none" stroke="#111" stroke-width="1.1"/><path d="M0 7.1 L4.4 3.6 V10.6 Z" fill="#111"/></svg>
<div class="t" style="left:827.0px;top:560.78px;font-size:10.25px;">239</div>
<svg class="ic" style="left:868.0px;top:555.01px" width="11" height="11" viewBox="0 0 11 11"><path d="M0.3 0.6 H8.6 L10.1 2.1 V5.6 L8.6 7.1 H3.6" fill="none" stroke="#111" stroke-width="1.1"/><path d="M0 7.1 L4.4 3.6 V10.6 Z" fill="#111"/></svg>
<div class="t" style="left:900.6px;top:560.78px;font-size:10.25px;">250.3</div>
<div class="c" style="left:1px;top:569.69px;width:29.40px;height:15.76px;background:#ffffff"></div>
<div class="c" style="left:32.1px;top:569.69px;width:49.30px;height:15.76px;background:#ffffff"></div>
<div class="c" style="left:83.1px;top:569.69px;width:150.80px;height:15.76px;background:#ffffff"></div>
<div class="c" style="left:235.6px;top:569.69px;width:230.40px;height:15.76px;background:#ffffff"></div>
<div class="c" style="left:467.7px;top:569.69px;width:119.90px;height:15.76px;background:#ffffff"></div>
<div class="c" style="left:589.3px;top:569.69px;width:90.80px;height:15.76px;background:#ffffff"></div>
<div class="c" style="left:681.8px;top:569.69px;width:29.10px;height:15.76px;background:#ffffff"></div>
<div class="c" style="left:712.6px;top:569.69px;width:80.50px;height:15.76px;background:#ffffff"></div>
<div class="c" style="left:794.8px;top:569.69px;width:29.80px;height:15.76px;background:#ffffff"></div>
<div class="c" style="left:826.3px;top:569.69px;width:39.70px;height:15.76px;background:#ffffff"></div>
<div class="c" style="left:867.7px;top:569.69px;width:30.30px;height:15.76px;background:#ffffff"></div>
<div class="c" style="left:899.2px;top:569.69px;width:50.10px;height:15.76px;background:#ffffff"></div>
<div class="c" style="left:950.9px;top:569.69px;width:70.10px;height:15.76px;background:#ffffff"></div>
<div class="t" style="left:2.2px;top:578.24px;font-size:10.25px;">24</div>
<div class="t" style="left:85.2px;top:578.24px;font-size:10.25px;">53</div>
<svg class="ic" style="left:236.2px;top:574.79px" width="11" height="11" viewBox="0 0 11 11"><rect x="0" y="0" width="11" height="11" fill="#4a5cff"/><rect x="1" y="1" width="9" height="9" fill="#0012f5"/><path d="M2 1.6 H9 V3.4 H6.3 V7.6 H9 V9.4 H2 V7.6 H4.7 V3.4 H2 Z" fill="#eef0ff"/></svg>
<div class="t" style="left:255.5px;top:576.74px;font-size:10.25px;">Rens (Rozenburg ZH)</div>
<div class="t" style="left:469.2px;top:578.24px;font-size:10.25px;">Nederland</div>
<div class="t" style="left:591px;top:578.24px;font-size:10.25px;">10.8</div>
<div class="t" style="left:714px;top:578.24px;font-size:10.25px;">20</div>
<svg class="ic" style="left:795.4px;top:572.47px" width="11" height="11" viewBox="0 0 11 11"><path d="M0.3 0.6 H8.6 L10.1 2.1 V5.6 L8.6 7.1 H3.6" fill="none" stroke="#111" stroke-width="1.1"/><path d="M0 7.1 L4.4 3.6 V10.6 Z" fill="#111"/></svg>
<div class="t" style="left:827.0px;top:578.24px;font-size:10.25px;">250</div>
<svg class="ic" style="left:868.0px;top:572.47px" width="11" height="11" viewBox="0 0 11 11"><path d="M0.3 0.6 H8.6 L10.1 2.1 V5.6 L8.6 7.1 H3.6" fill="none" stroke="#111" stroke-width="1.1"/><path d="M0 7.1 L4.4 3.6 V10.6 Z" fill="#111"/></svg>
<div class="t" style="left:900.6px;top:578.24px;font-size:10.25px;">249.6</div>
<div class="c" style="left:1px;top:587.15px;width:29.40px;height:15.76px;background:#ffffff"></div>
<div class="c" style="left:32.1px;top:587.15px;width:49.30px;height:15.76px;background:#ffffff"></div>
<div class="c" style="left:83.1px;top:587.15px;width:150.80px;height:15.76px;background:#ffffff"></div>
<div class="c" style="left:235.6px;top:587.15px;width:230.40px;height:15.76px;background:#ffffff"></div>
<div class="c" style="left:467.7px;top:587.15px;width:119.90px;height:15.76px;background:#ffffff"></div>
<div class="c" style="left:589.3px;top:587.15px;width:90.80px;height:15.76px;background:#ffffff"></div>
<div class="c" style="left:681.8px;top:587.15px;width:29.10px;height:15.76px;background:#ffffff"></div>
<div class="c" style="left:712.6px;top:587.15px;width:80.50px;height:15.76px;background:#ffffff"></div>
<div class="c" style="left:794.8px;top:587.15px;width:29.80px;height:15.76px;background:#ffffff"></div>
<div class="c" style="left:826.3px;top:587.15px;width:39.70px;height:15.76px;background:#ffffff"></div>
<div class="c" style="left:867.7px;top:587.15px;width:30.30px;height:15.76px;background:#ffffff"></div>
<div class="c" style="left:899.2px;top:587.15px;width:50.10px;height:15.76px;background:#ffffff"></div>
<div class="c" style="left:950.9px;top:587.15px;width:70.10px;height:15.76px;background:#ffffff"></div>
<div class="t" style="left:2.2px;top:595.70px;font-size:10.25px;">25</div>
<div class="t" style="left:85.2px;top:595.70px;font-size:10.25px;">103</div>
<svg class="ic" style="left:236.2px;top:592.25px" width="11" height="11" viewBox="0 0 11 11"><rect x="0" y="0" width="11" height="11" fill="#4a5cff"/><rect x="1" y="1" width="9" height="9" fill="#0012f5"/><path d="M2 1.6 H9 V3.4 H6.3 V7.6 H9 V9.4 H2 V7.6 H4.7 V3.4 H2 Z" fill="#eef0ff"/></svg>
<div class="t" style="left:255.5px;top:594.20px;font-size:10.25px;">Gerrit-Jan (Dokkum)</div>
<div class="t" style="left:469.2px;top:595.70px;font-size:10.25px;">Nederland</div>
<div class="t" style="left:591px;top:595.70px;font-size:10.25px;">10.4</div>
<div class="t" style="left:714px;top:595.70px;font-size:10.25px;">40</div>
<div class="t" style="left:827.0px;top:595.70px;font-size:10.25px;">240</div>
<svg class="ic" style="left:868.0px;top:589.93px" width="11" height="11" viewBox="0 0 11 11"><path d="M0.3 0.6 H8.6 L10.1 2.1 V5.6 L8.6 7.1 H3.6" fill="none" stroke="#111" stroke-width="1.1"/><path d="M0 7.1 L4.4 3.6 V10.6 Z" fill="#111"/></svg>
<div class="t" style="left:900.6px;top:595.70px;font-size:10.25px;">249.4</div>
<div class="c" style="left:1px;top:604.61px;width:29.40px;height:15.76px;background:#ffffff"></div>
<div class="c" style="left:32.1px;top:604.61px;width:49.30px;height:15.76px;background:#ffffff"></div>
<div class="c" style="left:83.1px;top:604.61px;width:150.80px;height:15.76px;background:#ffffff"></div>
<div class="c" style="left:235.6px;top:604.61px;width:230.40px;height:15.76px;background:#ffffff"></div>
<div class="c" style="left:467.7px;top:604.61px;width:119.90px;height:15.76px;background:#ffffff"></div>
<div class="c" style="left:589.3px;top:604.61px;width:90.80px;height:15.76px;background:#ffffff"></div>
<div class="c" style="left:681.8px;top:604.61px;width:29.10px;height:15.76px;background:#ffffff"></div>
<div class="c" style="left:712.6px;top:604.61px;width:80.50px;height:15.76px;background:#ffffff"></div>
<div class="c" style="left:794.8px;top:604.61px;width:29.80px;height:15.76px;background:#ffffff"></div>
<div class="c" style="left:826.3px;top:604.61px;width:39.70px;height:15.76px;background:#ffffff"></div>
<div class="c" style="left:867.7px;top:604.61px;width:30.30px;height:15.76px;background:#ffffff"></div>
<div class="c" style="left:899.2px;top:604.61px;width:50.10px;height:15.76px;background:#ffffff"></div>
<div class="c" style="left:950.9px;top:604.61px;width:70.10px;height:15.76px;background:#ffffff"></div>
<div class="t" style="left:2.2px;top:613.16px;font-size:10.25px;">26</div>
<div class="t" style="left:85.2px;top:613.16px;font-size:10.25px;">141</div>
<svg class="ic" style="left:236.2px;top:609.71px" width="11" height="11" viewBox="0 0 11 11"><rect x="0" y="0" width="11" height="11" fill="#4a5cff"/><rect x="1" y="1" width="9" height="9" fill="#0012f5"/><path d="M2 1.6 H9 V3.4 H6.3 V7.6 H9 V9.4 H2 V7.6 H4.7 V3.4 H2 Z" fill="#eef0ff"/></svg>
<div class="t" style="left:255.5px;top:611.66px;font-size:10.25px;">Tim (Monster)</div>
<div class="t" style="left:469.2px;top:613.16px;font-size:10.25px;">Nederland</div>
<div class="t" style="left:591px;top:613.16px;font-size:10.25px;">10.8</div>
<div class="t" style="left:714px;top:613.16px;font-size:10.25px;">25</div>
<svg class="ic" style="left:795.4px;top:607.39px" width="11" height="11" viewBox="0 0 11 11"><path d="M0.3 0.6 H8.6 L10.1 2.1 V5.6 L8.6 7.1 H3.6" fill="none" stroke="#111" stroke-width="1.1"/><path d="M0 7.1 L4.4 3.6 V10.6 Z" fill="#111"/></svg>
<div class="t" style="left:827.0px;top:613.16px;font-size:10.25px;">240</div>
<svg class="ic" style="left:868.0px;top:607.39px" width="11" height="11" viewBox="0 0 11 11"><path d="M0.3 0.6 H8.6 L10.1 2.1 V5.6 L8.6 7.1 H3.6" fill="none" stroke="#111" stroke-width="1.1"/><path d="M0 7.1 L4.4 3.6 V10.6 Z" fill="#111"/></svg>
<div class="t" style="left:900.6px;top:613.16px;font-size:10.25px;">249.2</div>
<div class="c" style="left:1px;top:622.07px;width:29.40px;height:15.76px;background:#ffffff"></div>
<div class="c" style="left:32.1px;top:622.07px;width:49.30px;height:15.76px;background:#ffffff"></div>
<div class="c" style="left:83.1px;top:622.07px;width:150.80px;height:15.76px;background:#ffffff"></div>
<div class="c" style="left:235.6px;top:622.07px;width:230.40px;height:15.76px;background:#ffffff"></div>
<div class="c" style="left:467.7px;top:622.07px;width:119.90px;height:15.76px;background:#ffffff"></div>
<div class="c" style="left:589.3px;top:622.07px;width:90.80px;height:15.76px;background:#ffffff"></div>
<div class="c" style="left:681.8px;top:622.07px;width:29.10px;height:15.76px;background:#ffffff"></div>
<div class="c" style="left:712.6px;top:622.07px;width:80.50px;height:15.76px;background:#ffffff"></div>
<div class="c" style="left:794.8px;top:622.07px;width:29.80px;height:15.76px;background:#ffffff"></div>
<div class="c" style="left:826.3px;top:622.07px;width:39.70px;height:15.76px;background:#ffffff"></div>
<div class="c" style="left:867.7px;top:622.07px;width:30.30px;height:15.76px;background:#ffffff"></div>
<div class="c" style="left:899.2px;top:622.07px;width:50.10px;height:15.76px;background:#ffffff"></div>
<div class="c" style="left:950.9px;top:622.07px;width:70.10px;height:15.76px;background:#ffffff"></div>
<div class="t" style="left:2.2px;top:630.62px;font-size:10.25px;">27</div>
<div class="t" style="left:85.2px;top:630.62px;font-size:10.25px;">80</div>
<svg class="ic" style="left:236.2px;top:627.17px" width="11" height="11" viewBox="0 0 11 11"><rect x="0" y="0" width="11" height="11" fill="#4a5cff"/><rect x="1" y="1" width="9" height="9" fill="#0012f5"/><path d="M2 1.6 H9 V3.4 H6.3 V7.6 H9 V9.4 H2 V7.6 H4.7 V3.4 H2 Z" fill="#eef0ff"/></svg>
<div class="t" style="left:255.5px;top:629.12px;font-size:10.25px;">Jochem (Rotterdam)</div>
<div class="t" style="left:469.2px;top:630.62px;font-size:10.25px;">Nederland</div>
<div class="t" style="left:591px;top:630.62px;font-size:10.25px;">11.4</div>
<div class="t" style="left:714px;top:630.62px;font-size:10.25px;">32</div>
<svg class="ic" style="left:795.4px;top:624.85px" width="11" height="11" viewBox="0 0 11 11"><path d="M0.3 0.6 H8.6 L10.1 2.1 V5.6 L8.6 7.1 H3.6" fill="none" stroke="#111" stroke-width="1.1"/><path d="M0 7.1 L4.4 3.6 V10.6 Z" fill="#111"/></svg>
<div class="t" style="left:827.0px;top:630.62px;font-size:10.25px;">202</div>
<svg class="ic" style="left:868.0px;top:624.85px" width="11" height="11" viewBox="0 0 11 11"><path d="M0.3 0.6 H8.6 L10.1 2.1 V5.6 L8.6 7.1 H3.6" fill="none" stroke="#111" stroke-width="1.1"/><path d="M0 7.1 L4.4 3.6 V10.6 Z" fill="#111"/></svg>
<div class="t" style="left:900.6px;top:630.62px;font-size:10.25px;">249</div>
<div class="c" style="left:1px;top:639.53px;width:29.40px;height:15.76px;background:#ffffff"></div>
<div class="c" style="left:32.1px;top:639.53px;width:49.30px;height:15.76px;background:#ffffff"></div>
<div class="c" style="left:83.1px;top:639.53px;width:150.80px;height:15.76px;background:#ffffff"></div>
<div class="c" style="left:235.6px;top:639.53px;width:230.40px;height:15.76px;background:#ffffff"></div>
<div class="c" style="left:467.7px;top:639.53px;width:119.90px;height:15.76px;background:#ffffff"></div>
<div class="c" style="left:589.3px;top:639.53px;width:90.80px;height:15.76px;background:#ffffff"></div>
<div class="c" style="left:681.8px;top:639.53px;width:29.10px;height:15.76px;background:#ffffff"></div>
<div class="c" style="left:712.6px;top:639.53px;width:80.50px;height:15.76px;background:#ffffff"></div>
<div class="c" style="left:794.8px;top:639.53px;width:29.80px;height:15.76px;background:#ffffff"></div>
<div class="c" style="left:826.3px;top:639.53px;width:39.70px;height:15.76px;background:#ffffff"></div>
<div class="c" style="left:867.7px;top:639.53px;width:30.30px;height:15.76px;background:#ffffff"></div>
<div class="c" style="left:899.2px;top:639.53px;width:50.10px;height:15.76px;background:#ffffff"></div>
<div class="c" style="left:950.9px;top:639.53px;width:70.10px;height:15.76px;background:#ffffff"></div>
<div class="t" style="left:2.2px;top:648.08px;font-size:10.25px;">28</div>
<div class="t" style="left:85.2px;top:648.08px;font-size:10.25px;">130</div>
<svg class="ic" style="left:236.2px;top:644.63px" width="11" height="11" viewBox="0 0 11 11"><rect x="0" y="0" width="11" height="11" fill="#4a5cff"/><rect x="1" y="1" width="9" height="9" fill="#0012f5"/><path d="M2 1.6 H9 V3.4 H6.3 V7.6 H9 V9.4 H2 V7.6 H4.7 V3.4 H2 Z" fill="#eef0ff"/></svg>
<div class="t" style="left:255.5px;top:646.58px;font-size:10.25px;">Erik (Veendam)</div>
<div class="t" style="left:469.2px;top:648.08px;font-size:10.25px;">Nederland</div>
<div class="t" style="left:591px;top:648.08px;font-size:10.25px;">11.2</div>
<div class="t" style="left:714px;top:648.08px;font-size:10.25px;">19</div>
<svg class="ic" style="left:795.4px;top:642.31px" width="11" height="11" viewBox="0 0 11 11"><path d="M0.3 0.6 H8.6 L10.1 2.1 V5.6 L8.6 7.1 H3.6" fill="none" stroke="#111" stroke-width="1.1"/><path d="M0 7.1 L4.4 3.6 V10.6 Z" fill="#111"/></svg>
<div class="t" style="left:827.0px;top:648.08px;font-size:10.25px;">234</div>
<svg class="ic" style="left:868.0px;top:642.31px" width="11" height="11" viewBox="0 0 11 11"><path d="M0.3 0.6 H8.6 L10.1 2.1 V5.6 L8.6 7.1 H3.6" fill="none" stroke="#111" stroke-width="1.1"/><path d="M0 7.1 L4.4 3.6 V10.6 Z" fill="#111"/></svg>
<div class="t" style="left:900.6px;top:648.08px;font-size:10.25px;">248.6</div>
<div class="c" style="left:1px;top:656.99px;width:29.40px;height:15.76px;background:#ffffff"></div>
<div class="c" style="left:32.1px;top:656.99px;width:49.30px;height:15.76px;background:#ffffff"></div>
<div class="c" style="left:83.1px;top:656.99px;width:150.80px;height:15.76px;background:#ffffff"></div>
<div class="c" style="left:235.6px;top:656.99px;width:230.40px;height:15.76px;background:#ffffff"></div>
<div class="c" style="left:467.7px;top:656.99px;width:119.90px;height:15.76px;background:#ffffff"></div>
<div class="c" style="left:589.3px;top:656.99px;width:90.80px;height:15.76px;background:#ffffff"></div>
<div class="c" style="left:681.8px;top:656.99px;width:29.10px;height:15.76px;background:#ffffff"></div>
<div class="c" style="left:712.6px;top:656.99px;width:80.50px;height:15.76px;background:#ffffff"></div>
<div class="c" style="left:794.8px;top:656.99px;width:29.80px;height:15.76px;background:#ffffff"></div>
<div class="c" style="left:826.3px;top:656.99px;width:39.70px;height:15.76px;background:#ffffff"></div>
<div class="c" style="left:867.7px;top:656.99px;width:30.30px;height:15.76px;background:#ffffff"></div>
<div class="c" style="left:899.2px;top:656.99px;width:50.10px;height:15.76px;background:#ffffff"></div>
<div class="c" style="left:950.9px;top:656.99px;width:70.10px;height:15.76px;background:#ffffff"></div>
<div class="t" style="left:2.2px;top:665.54px;font-size:10.25px;">29</div>
<div class="t" style="left:85.2px;top:665.54px;font-size:10.25px;">84</div>
<svg class="ic" style="left:236.2px;top:662.09px" width="11" height="11" viewBox="0 0 11 11"><rect x="0" y="0" width="11" height="11" fill="#4a5cff"/><rect x="1" y="1" width="9" height="9" fill="#0012f5"/><path d="M2 1.6 H9 V3.4 H6.3 V7.6 H9 V9.4 H2 V7.6 H4.7 V3.4 H2 Z" fill="#eef0ff"/></svg>
<div class="t" style="left:255.5px;top:664.04px;font-size:10.25px;">Peter (Ameide)</div>
<div class="t" style="left:469.2px;top:665.54px;font-size:10.25px;">Nederland</div>
<div class="t" style="left:591px;top:665.54px;font-size:10.25px;">11.3</div>
<div class="t" style="left:714px;top:665.54px;font-size:10.25px;">33</div>
<svg class="ic" style="left:795.4px;top:659.77px" width="11" height="11" viewBox="0 0 11 11"><path d="M0.3 0.6 H8.6 L10.1 2.1 V5.6 L8.6 7.1 H3.6" fill="none" stroke="#111" stroke-width="1.1"/><path d="M0 7.1 L4.4 3.6 V10.6 Z" fill="#111"/></svg>
<div class="t" style="left:827.0px;top:665.54px;font-size:10.25px;">203</div>
<svg class="ic" style="left:868.0px;top:659.77px" width="11" height="11" viewBox="0 0 11 11"><path d="M0.3 0.6 H8.6 L10.1 2.1 V5.6 L8.6 7.1 H3.6" fill="none" stroke="#111" stroke-width="1.1"/><path d="M0 7.1 L4.4 3.6 V10.6 Z" fill="#111"/></svg>
<div class="t" style="left:900.6px;top:665.54px;font-size:10.25px;">248.2</div>
<div class="c" style="left:1px;top:674.45px;width:29.40px;height:15.76px;background:#ffffff"></div>
<div class="c" style="left:32.1px;top:674.45px;width:49.30px;height:15.76px;background:#ffffff"></div>
<div class="c" style="left:83.1px;top:674.45px;width:150.80px;height:15.76px;background:#ffffff"></div>
<div class="c" style="left:235.6px;top:674.45px;width:230.40px;height:15.76px;background:#ffffff"></div>
<div class="c" style="left:467.7px;top:674.45px;width:119.90px;height:15.76px;background:#ffffff"></div>
<div class="c" style="left:589.3px;top:674.45px;width:90.80px;height:15.76px;background:#ffffff"></div>
<div class="c" style="left:681.8px;top:674.45px;width:29.10px;height:15.76px;background:#ffffff"></div>
<div class="c" style="left:712.6px;top:674.45px;width:80.50px;height:15.76px;background:#ffffff"></div>
<div class="c" style="left:794.8px;top:674.45px;width:29.80px;height:15.76px;background:#ffffff"></div>
<div class="c" style="left:826.3px;top:674.45px;width:39.70px;height:15.76px;background:#ffffff"></div>
<div class="c" style="left:867.7px;top:674.45px;width:30.30px;height:15.76px;background:#ffffff"></div>
<div class="c" style="left:899.2px;top:674.45px;width:50.10px;height:15.76px;background:#ffffff"></div>
<div class="c" style="left:950.9px;top:674.45px;width:70.10px;height:15.76px;background:#ffffff"></div>
<div class="t" style="left:2.2px;top:683.00px;font-size:10.25px;">30</div>
<div class="t" style="left:85.2px;top:683.00px;font-size:10.25px;">105</div>
<svg class="ic" style="left:236.2px;top:679.55px" width="11" height="11" viewBox="0 0 11 11"><rect x="0" y="0" width="11" height="11" fill="#4a5cff"/><rect x="1" y="1" width="9" height="9" fill="#0012f5"/><path d="M2 1.6 H9 V3.4 H6.3 V7.6 H9 V9.4 H2 V7.6 H4.7 V3.4 H2 Z" fill="#eef0ff"/></svg>
<div class="t" style="left:255.5px;top:681.50px;font-size:10.25px;">Diederik B (Den Haag)</div>
<div class="t" style="left:469.2px;top:683.00px;font-size:10.25px;">Ronsweersite</div>
<div class="t" style="left:591px;top:683.00px;font-size:10.25px;">11.0</div>
<div class="t" style="left:714px;top:683.00px;font-size:10.25px;">35</div>
<svg class="ic" style="left:795.4px;top:677.23px" width="11" height="11" viewBox="0 0 11 11"><path d="M0.3 0.6 H8.6 L10.1 2.1 V5.6 L8.6 7.1 H3.6" fill="none" stroke="#111" stroke-width="1.1"/><path d="M0 7.1 L4.4 3.6 V10.6 Z" fill="#111"/></svg>
<div class="t" style="left:827.0px;top:683.00px;font-size:10.25px;">210</div>
<svg class="ic" style="left:868.0px;top:677.23px" width="11" height="11" viewBox="0 0 11 11"><path d="M0.3 0.6 H8.6 L10.1 2.1 V5.6 L8.6 7.1 H3.6" fill="none" stroke="#111" stroke-width="1.1"/><path d="M0 7.1 L4.4 3.6 V10.6 Z" fill="#111"/></svg>
<div class="t" style="left:900.6px;top:683.00px;font-size:10.25px;">247.1</div>
<div class="c" style="left:1px;top:691.91px;width:29.40px;height:15.76px;background:#ffffff"></div>
<div class="c" style="left:32.1px;top:691.91px;width:49.30px;height:15.76px;background:#ffffff"></div>
<div class="c" style="left:83.1px;top:691.91px;width:150.80px;height:15.76px;background:#ffffff"></div>
<div class="c" style="left:235.6px;top:691.91px;width:230.40px;height:15.76px;background:#ffffff"></div>
<div class="c" style="left:467.7px;top:691.91px;width:119.90px;height:15.76px;background:#ffffff"></div>
<div class="c" style="left:589.3px;top:691.91px;width:90.80px;height:15.76px;background:#ffffff"></div>
<div class="c" style="left:681.8px;top:691.91px;width:29.10px;height:15.76px;background:#ffffff"></div>
<div class="c" style="left:712.6px;top:691.91px;width:80.50px;height:15.76px;background:#ffffff"></div>
<div class="c" style="left:794.8px;top:691.91px;width:29.80px;height:15.76px;background:#ffffff"></div>
<div class="c" style="left:826.3px;top:691.91px;width:39.70px;height:15.76px;background:#ffffff"></div>
<div class="c" style="left:867.7px;top:691.91px;width:30.30px;height:15.76px;background:#ffffff"></div>
<div class="c" style="left:899.2px;top:691.91px;width:50.10px;height:15.76px;background:#ffffff"></div>
<div class="c" style="left:950.9px;top:691.91px;width:70.10px;height:15.76px;background:#ffffff"></div>
<div class="t" style="left:2.2px;top:700.46px;font-size:10.25px;">31</div>
<div class="t" style="left:85.2px;top:700.46px;font-size:10.25px;">52</div>
<svg class="ic" style="left:236.2px;top:697.01px" width="11" height="11" viewBox="0 0 11 11"><rect x="0" y="0" width="11" height="11" fill="#4a5cff"/><rect x="1" y="1" width="9" height="9" fill="#0012f5"/><path d="M2 1.6 H9 V3.4 H6.3 V7.6 H9 V9.4 H2 V7.6 H4.7 V3.4 H2 Z" fill="#eef0ff"/></svg>
<div class="t" style="left:255.5px;top:698.96px;font-size:10.25px;">Alphons (Ubbergen)</div>
<div class="t" style="left:469.2px;top:700.46px;font-size:10.25px;">Nederland</div>
<div class="t" style="left:591px;top:700.46px;font-size:10.25px;">10.5</div>
<div class="t" style="left:714px;top:700.46px;font-size:10.25px;">27</div>
<svg class="ic" style="left:795.4px;top:694.69px" width="11" height="11" viewBox="0 0 11 11"><path d="M0.3 0.6 H8.6 L10.1 2.1 V5.6 L8.6 7.1 H3.6" fill="none" stroke="#111" stroke-width="1.1"/><path d="M0 7.1 L4.4 3.6 V10.6 Z" fill="#111"/></svg>
<div class="t" style="left:827.0px;top:700.46px;font-size:10.25px;">245</div>
<svg class="ic" style="left:868.0px;top:694.69px" width="11" height="11" viewBox="0 0 11 11"><path d="M0.3 0.6 H8.6 L10.1 2.1 V5.6 L8.6 7.1 H3.6" fill="none" stroke="#111" stroke-width="1.1"/><path d="M0 7.1 L4.4 3.6 V10.6 Z" fill="#111"/></svg>
<div class="t" style="left:900.6px;top:700.46px;font-size:10.25px;">246.8</div>
<div class="c" style="left:1px;top:709.37px;width:29.40px;height:15.76px;background:#ffffff"></div>
<div class="c" style="left:32.1px;top:709.37px;width:49.30px;height:15.76px;background:#ffffff"></div>
<div class="c" style="left:83.1px;top:709.37px;width:150.80px;height:15.76px;background:#ffffff"></div>
<div class="c" style="left:235.6px;top:709.37px;width:230.40px;height:15.76px;background:#ffffff"></div>
<div class="c" style="left:467.7px;top:709.37px;width:119.90px;height:15.76px;background:#ffffff"></div>
<div class="c" style="left:589.3px;top:709.37px;width:90.80px;height:15.76px;background:#ffffff"></div>
<div class="c" style="left:681.8px;top:709.37px;width:29.10px;height:15.76px;background:#ffffff"></div>
<div class="c" style="left:712.6px;top:709.37px;width:80.50px;height:15.76px;background:#ffffff"></div>
<div class="c" style="left:794.8px;top:709.37px;width:29.80px;height:15.76px;background:#ffffff"></div>
<div class="c" style="left:826.3px;top:709.37px;width:39.70px;height:15.76px;background:#ffffff"></div>
<div class="c" style="left:867.7px;top:709.37px;width:30.30px;height:15.76px;background:#ffffff"></div>
<div class="c" style="left:899.2px;top:709.37px;width:50.10px;height:15.76px;background:#ffffff"></div>
<div class="c" style="left:950.9px;top:709.37px;width:70.10px;height:15.76px;background:#ffffff"></div>
<div class="t" style="left:2.2px;top:717.92px;font-size:10.25px;">32</div>
<div class="t" style="left:85.2px;top:717.92px;font-size:10.25px;">112</div>
<svg class="ic" style="left:236.2px;top:714.47px" width="11" height="11" viewBox="0 0 11 11"><rect x="0" y="0" width="11" height="11" fill="#4a5cff"/><rect x="1" y="1" width="9" height="9" fill="#0012f5"/><path d="M2 1.6 H9 V3.4 H6.3 V7.6 H9 V9.4 H2 V7.6 H4.7 V3.4 H2 Z" fill="#eef0ff"/></svg>
<div class="t" style="left:255.5px;top:716.42px;font-size:10.25px;">Dick (Woudenberg)</div>
<div class="t" style="left:469.2px;top:717.92px;font-size:10.25px;">Nederland</div>
<div class="t" style="left:591px;top:717.92px;font-size:10.25px;">11.0</div>
<div class="t" style="left:714px;top:717.92px;font-size:10.25px;">45</div>
<div class="t" style="left:827.0px;top:717.92px;font-size:10.25px;">220</div>
<svg class="ic" style="left:868.0px;top:712.15px" width="11" height="11" viewBox="0 0 11 11"><path d="M0.3 0.6 H8.6 L10.1 2.1 V5.6 L8.6 7.1 H3.6" fill="none" stroke="#111" stroke-width="1.1"/><path d="M0 7.1 L4.4 3.6 V10.6 Z" fill="#111"/></svg>
<div class="t" style="left:900.6px;top:717.92px;font-size:10.25px;">246.3</div>
<div class="c" style="left:1px;top:726.83px;width:29.40px;height:15.76px;background:#ffffff"></div>
<div class="c" style="left:32.1px;top:726.83px;width:49.30px;height:15.76px;background:#ffffff"></div>
<div class="c" style="left:83.1px;top:726.83px;width:150.80px;height:15.76px;background:#ffffff"></div>
<div class="c" style="left:235.6px;top:726.83px;width:230.40px;height:15.76px;background:#ffffff"></div>
<div class="c" style="left:467.7px;top:726.83px;width:119.90px;height:15.76px;background:#ffffff"></div>
<div class="c" style="left:589.3px;top:726.83px;width:90.80px;height:15.76px;background:#ffffff"></div>
<div class="c" style="left:681.8px;top:726.83px;width:29.10px;height:15.76px;background:#ffffff"></div>
<div class="c" style="left:712.6px;top:726.83px;width:80.50px;height:15.76px;background:#ffffff"></div>
<div class="c" style="left:794.8px;top:726.83px;width:29.80px;height:15.76px;background:#ffffff"></div>
<div class="c" style="left:826.3px;top:726.83px;width:39.70px;height:15.76px;background:#ffffff"></div>
<div class="c" style="left:867.7px;top:726.83px;width:30.30px;height:15.76px;background:#ffffff"></div>
<div class="c" style="left:899.2px;top:726.83px;width:50.10px;height:15.76px;background:#ffffff"></div>
<div class="c" style="left:950.9px;top:726.83px;width:70.10px;height:15.76px;background:#ffffff"></div>
<div class="t" style="left:2.2px;top:735.38px;font-size:10.25px;">33</div>
<div class="t" style="left:85.2px;top:735.38px;font-size:10.25px;">75</div>
<svg class="ic" style="left:236.2px;top:731.93px" width="11" height="11" viewBox="0 0 11 11"><rect x="0" y="0" width="11" height="11" fill="#4a5cff"/><rect x="1" y="1" width="9" height="9" fill="#0012f5"/><path d="M2 1.6 H9 V3.4 H6.3 V7.6 H9 V9.4 H2 V7.6 H4.7 V3.4 H2 Z" fill="#eef0ff"/></svg>
<div class="t" style="left:255.5px;top:733.88px;font-size:10.25px;">Moreno (Opglabbeek)</div>
<div class="t" style="left:469.2px;top:735.38px;font-size:10.25px;">België</div>
<div class="t" style="left:591px;top:735.38px;font-size:10.25px;">10.7</div>
<div class="t" style="left:714px;top:735.38px;font-size:10.25px;">30</div>
<svg class="ic" style="left:795.4px;top:729.61px" width="11" height="11" viewBox="0 0 11 11"><path d="M0.3 0.6 H8.6 L10.1 2.1 V5.6 L8.6 7.1 H3.6" fill="none" stroke="#111" stroke-width="1.1"/><path d="M0 7.1 L4.4 3.6 V10.6 Z" fill="#111"/></svg>
<div class="t" style="left:827.0px;top:735.38px;font-size:10.25px;">230</div>
<svg class="ic" style="left:868.0px;top:729.61px" width="11" height="11" viewBox="0 0 11 11"><path d="M0.3 0.6 H8.6 L10.1 2.1 V5.6 L8.6 7.1 H3.6" fill="none" stroke="#111" stroke-width="1.1"/><path d="M0 7.1 L4.4 3.6 V10.6 Z" fill="#111"/></svg>
<div class="t" style="left:900.6px;top:735.38px;font-size:10.25px;">246</div>
<div class="c" style="left:1px;top:744.29px;width:29.40px;height:17.60px;background:#ffffff"></div>
<div class="c" style="left:32.1px;top:744.29px;width:49.30px;height:17.60px;background:#ffffff"></div>
<div class="c" style="left:83.1px;top:744.29px;width:150.80px;height:17.60px;background:#ffffff"></div>
<div class="c" style="left:235.6px;top:744.29px;width:230.40px;height:17.60px;background:#ffffff"></div>
<div class="c" style="left:467.7px;top:744.29px;width:119.90px;height:17.60px;background:#ffffff"></div>
<div class="c" style="left:589.3px;top:744.29px;width:90.80px;height:17.60px;background:#ffffff"></div>
<div class="c" style="left:681.8px;top:744.29px;width:29.10px;height:17.60px;background:#ffffff"></div>
<div class="c" style="left:712.6px;top:744.29px;width:80.50px;height:17.60px;background:#ffffff"></div>
<div class="c" style="left:794.8px;top:744.29px;width:29.80px;height:17.60px;background:#ffffff"></div>
<div class="c" style="left:826.3px;top:744.29px;width:39.70px;height:17.60px;background:#ffffff"></div>
<div class="c" style="left:867.7px;top:744.29px;width:30.30px;height:17.60px;background:#ffffff"></div>
<div class="c" style="left:899.2px;top:744.29px;width:50.10px;height:17.60px;background:#ffffff"></div>
<div class="c" style="left:950.9px;top:744.29px;width:70.10px;height:17.60px;background:#ffffff"></div>
<div class="t" style="left:2.2px;top:753.34px;font-size:10.25px;">34</div>
<div class="t" style="left:85.2px;top:756.34px;font-size:10.25px;">29</div>
<svg class="ic" style="left:104.2px;top:744.69px" width="10" height="15" viewBox="0 0 10 15"><path d="M0.3 0.2 H9.3 V1.2 L6.2 5.6 H3.4 L0.3 1.2 Z" fill="#262626"/><path d="M1.6 1.2 H8 L6 4.6 H3.6 Z" fill="#8a8a8a"/><circle cx="4.8" cy="2.9" r="1.9" fill="#1a3cff"/><path d="M2.9 5.4 H6.7 L9.6 8 V11.8 L7.2 14.3 H2.4 L0 11.8 V8 Z" fill="#262626"/><circle cx="4.8" cy="9.9" r="3.9" fill="#e8c41c"/><path d="M4.4 8 L5.4 7.6 V12.4" fill="none" stroke="#2a2a2a" stroke-width="1"/></svg>
<svg class="ic" style="left:236.2px;top:749.79px" width="11" height="11" viewBox="0 0 11 11"><rect x="0" y="0" width="11" height="11" fill="#4a5cff"/><rect x="1" y="1" width="9" height="9" fill="#0012f5"/><path d="M2 1.6 H9 V3.4 H6.3 V7.6 H9 V9.4 H2 V7.6 H4.7 V3.4 H2 Z" fill="#eef0ff"/></svg>
<div class="t" style="left:255.5px;top:752.74px;font-size:10.25px;">Thomas (Vorden)</div>
<div class="t" style="left:469.2px;top:753.34px;font-size:10.25px;">Nederland</div>
<div class="t" style="left:591px;top:753.34px;font-size:10.25px;">11.2</div>
<div class="t" style="left:714px;top:753.34px;font-size:10.25px;">35</div>
<svg class="ic" style="left:795.4px;top:747.99px" width="11" height="11" viewBox="0 0 11 11"><path d="M0.3 0.6 H8.6 L10.1 2.1 V5.6 L8.6 7.1 H3.6" fill="none" stroke="#111" stroke-width="1.1"/><path d="M0 7.1 L4.4 3.6 V10.6 Z" fill="#111"/></svg>
<div class="t" style="left:827.0px;top:753.34px;font-size:10.25px;">200</div>
<svg class="ic" style="left:868.0px;top:747.99px" width="11" height="11" viewBox="0 0 11 11"><path d="M0.3 0.6 H8.6 L10.1 2.1 V5.6 L8.6 7.1 H3.6" fill="none" stroke="#111" stroke-width="1.1"/><path d="M0 7.1 L4.4 3.6 V10.6 Z" fill="#111"/></svg>
<div class="t" style="left:900.6px;top:753.34px;font-size:10.25px;">245.9</div>
<div class="c" style="left:1px;top:763.59px;width:29.40px;height:15.76px;background:#ffffff"></div>
<div class="c" style="left:32.1px;top:763.59px;width:49.30px;height:15.76px;background:#ffffff"></div>
<div class="c" style="left:83.1px;top:763.59px;width:150.80px;height:15.76px;background:#ffffff"></div>
<div class="c" style="left:235.6px;top:763.59px;width:230.40px;height:15.76px;background:#ffffff"></div>
<div class="c" style="left:467.7px;top:763.59px;width:119.90px;height:15.76px;background:#ffffff"></div>
<div class="c" style="left:589.3px;top:763.59px;width:90.80px;height:15.76px;background:#ffffff"></div>
<div class="c" style="left:681.8px;top:763.59px;width:29.10px;height:15.76px;background:#ffffff"></div>
<div class="c" style="left:712.6px;top:763.59px;width:80.50px;height:15.76px;background:#ffffff"></div>
<div class="c" style="left:794.8px;top:763.59px;width:29.80px;height:15.76px;background:#ffffff"></div>
<div class="c" style="left:826.3px;top:763.59px;width:39.70px;height:15.76px;background:#ffffff"></div>
<div class="c" style="left:867.7px;top:763.59px;width:30.30px;height:15.76px;background:#ffffff"></div>
<div class="c" style="left:899.2px;top:763.59px;width:50.10px;height:15.76px;background:#ffffff"></div>
<div class="c" style="left:950.9px;top:763.59px;width:70.10px;height:15.76px;background:#ffffff"></div>
<div class="t" style="left:2.2px;top:772.14px;font-size:10.25px;">35</div>
<div class="t" style="left:85.2px;top:772.14px;font-size:10.25px;">136</div>
<svg class="ic" style="left:236.2px;top:768.69px" width="11" height="11" viewBox="0 0 11 11"><rect x="0" y="0" width="11" height="11" fill="#4a5cff"/><rect x="1" y="1" width="9" height="9" fill="#0012f5"/><path d="M2 1.6 H9 V3.4 H6.3 V7.6 H9 V9.4 H2 V7.6 H4.7 V3.4 H2 Z" fill="#eef0ff"/></svg>
<div class="t" style="left:255.5px;top:770.64px;font-size:10.25px;">Tim (Kessel-lo)</div>
<div class="t" style="left:469.2px;top:772.14px;font-size:10.25px;">België</div>
<div class="t" style="left:591px;top:772.14px;font-size:10.25px;">10.7</div>
<div class="t" style="left:714px;top:772.14px;font-size:10.25px;">27</div>
<svg class="ic" style="left:795.4px;top:766.37px" width="11" height="11" viewBox="0 0 11 11"><path d="M0.3 0.6 H8.6 L10.1 2.1 V5.6 L8.6 7.1 H3.6" fill="none" stroke="#111" stroke-width="1.1"/><path d="M0 7.1 L4.4 3.6 V10.6 Z" fill="#111"/></svg>
<div class="t" style="left:827.0px;top:772.14px;font-size:10.25px;">235</div>
<svg class="ic" style="left:868.0px;top:766.37px" width="11" height="11" viewBox="0 0 11 11"><path d="M0.3 0.6 H8.6 L10.1 2.1 V5.6 L8.6 7.1 H3.6" fill="none" stroke="#111" stroke-width="1.1"/><path d="M0 7.1 L4.4 3.6 V10.6 Z" fill="#111"/></svg>
<div class="t" style="left:900.6px;top:772.14px;font-size:10.25px;">245.6</div>
</body></html>
